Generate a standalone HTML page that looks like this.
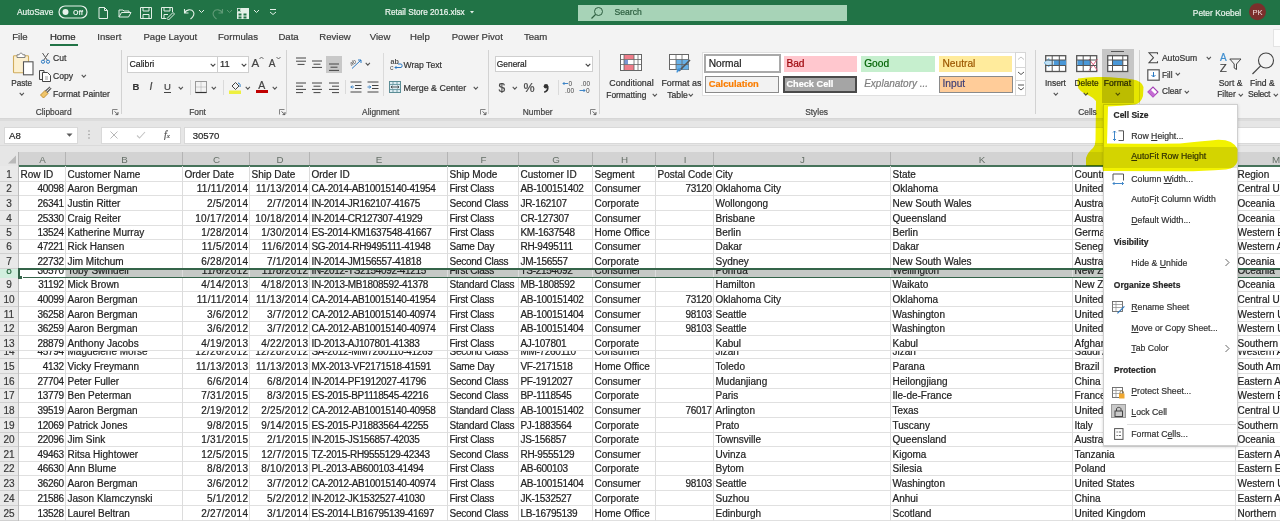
<!DOCTYPE html>
<html><head><meta charset="utf-8"><style>
html,body{margin:0;padding:0;width:1280px;height:521px;overflow:hidden;background:#fff;}
body{position:relative;font-family:"Liberation Sans", sans-serif;}
.t{position:absolute;white-space:nowrap;-webkit-text-stroke-width:0.2px;}
.r{position:absolute;}
.s{position:absolute;overflow:visible;}
u{text-decoration:underline;text-underline-offset:1px;text-decoration-thickness:0.6px;}
</style></head><body>
<div class="r" style="left:0px;top:0px;width:1280px;height:24.5px;background:#217346;"></div><div class="t" style="left:17.00px;top:8.49px;font-size:8.4px;line-height:8.4px;color:#e8f3ec;">AutoSave</div><svg class="s" style="left:58px;top:5px;" width="30" height="14" viewBox="0 0 30 14"><rect x="1" y="1" width="28" height="12" rx="6" fill="none" stroke="#e8f3ec" stroke-width="1.2"/><circle cx="7.5" cy="7" r="3" fill="#e8f3ec"/><text x="15" y="10" font-family="Liberation Sans" font-size="7" font-weight="bold" fill="#e8f3ec">Off</text></svg><svg class="s" style="left:97px;top:6px;" width="12" height="14" viewBox="0 0 12 14"><path d="M2 1.5 H7.5 L10.5 4.5 V12.5 H2 Z M7.5 1.5 V4.5 H10.5" fill="none" stroke="#e3f0e7" stroke-width="1"/></svg><svg class="s" style="left:118px;top:8px;" width="14" height="11" viewBox="0 0 14 11"><path d="M1 2 H5 L6 3 H11 V5 M1 2 V9 H10.5 L13 4.5 H3.5 L1 9" fill="none" stroke="#e3f0e7" stroke-width="1"/></svg><svg class="s" style="left:139px;top:6px;" width="14" height="14" viewBox="0 0 14 14"><path d="M1.5 1.5 H12.5 V12.5 H1.5 Z M4 1.5 V5 H10 V1.5 M4 12.5 V8.5 H10 V12.5" fill="none" stroke="#e3f0e7" stroke-width="1"/></svg><svg class="s" style="left:160px;top:6px;" width="15" height="14" viewBox="0 0 15 14"><path d="M1.5 1.5 H12.5 V6 M1.5 1.5 V12.5 H6 M4 1.5 V5 H10 V1.5 M4 12.5 V8.5 H8" fill="none" stroke="#e3f0e7" stroke-width="1"/><path d="M7 12.5 L13 6.5 L14.5 8 L8.5 14 Z" fill="none" stroke="#e3f0e7" stroke-width="1"/></svg><svg class="s" style="left:182px;top:6px;" width="14" height="14" viewBox="0 0 14 14"><path d="M2.5 3 V7 H6.5 M2.5 7 C4 3.5 9.5 2.5 11.5 6 C13 9 11 11 8.5 13" fill="none" stroke="#e3f0e7" stroke-width="1.1"/></svg><svg class="s" style="left:198px;top:9px;" width="7" height="5" viewBox="0 0 7 5"><path d="M1 1 L3.5 3.5 L6 1" fill="none" stroke="#e3f0e7" stroke-width="1"/></svg><svg class="s" style="left:211px;top:6px;" width="14" height="14" viewBox="0 0 14 14"><path d="M11.5 3 V7 H7.5 M11.5 7 C10 3.5 4.5 2.5 2.5 6 C1 9 3 11 5.5 13" fill="none" stroke="#5f9a76" stroke-width="1.1"/></svg><svg class="s" style="left:226px;top:9px;" width="7" height="5" viewBox="0 0 7 5"><path d="M1 1 L3.5 3.5 L6 1" fill="none" stroke="#5f9a76" stroke-width="1"/></svg><svg class="s" style="left:236px;top:7px;" width="14" height="12" viewBox="0 0 14 12"><rect x="1" y="1" width="12" height="11" fill="#e3f0e7"/><rect x="2.5" y="6.5" width="3" height="2" fill="#217346"/><rect x="7.5" y="6.5" width="3" height="2" fill="#217346"/><rect x="2.5" y="9.5" width="3" height="2" fill="#217346"/><rect x="7.5" y="9.5" width="3" height="2" fill="#217346"/><rect x="1" y="1" width="4" height="4" fill="#217346"/><rect x="1.5" y="1.5" width="3" height="3" fill="none" stroke="#e3f0e7" stroke-width="0.8"/></svg><svg class="s" style="left:253px;top:9px;" width="7" height="5" viewBox="0 0 7 5"><path d="M1 1 L3.5 3.5 L6 1" fill="none" stroke="#e3f0e7" stroke-width="1"/></svg><svg class="s" style="left:269px;top:8px;" width="8" height="9" viewBox="0 0 8 9"><path d="M1 1.5 H7 M1 4 L4 6.5 L7 4" fill="none" stroke="#e3f0e7" stroke-width="1"/></svg><div class="t" style="left:385.00px;top:9.16px;font-size:8.2px;line-height:8.2px;color:#eef6f0;">Retail Store 2016.xlsx</div><svg class="s" style="left:469px;top:10px;" width="7" height="5" viewBox="0 0 7 5"><path d="M1 1 L5 1 L3 3.5 Z" fill="#e3f0e7"/></svg><div class="r" style="left:578px;top:4.5px;width:269px;height:16px;background:#a7d3b7;"></div><svg class="s" style="left:590px;top:6px;" width="14" height="14" viewBox="0 0 14 14"><circle cx="8.5" cy="5.5" r="4" fill="none" stroke="#2b5d3e" stroke-width="1"/><path d="M5.5 8.5 L1.5 12.5" stroke="#2b5d3e" stroke-width="1.1"/></svg><div class="t" style="left:614.50px;top:8.32px;font-size:8.6px;line-height:8.6px;color:#2b5d3e;">Search</div><div class="t" style="left:1192.80px;top:8.79px;font-size:8.4px;line-height:8.4px;color:#e8f3ec;">Peter Koebel</div><svg class="s" style="left:1248px;top:3px;" width="19" height="18" viewBox="0 0 19 18"><circle cx="9.5" cy="8.8" r="8.5" fill="#7b2f2c"/><text x="9.5" y="11.9" text-anchor="middle" font-family="Liberation Sans" font-size="7.6" fill="#f3dede">PK</text></svg><div class="r" style="left:0px;top:24.5px;width:1280px;height:93.5px;background:#f3f3f3;"></div><div class="t" style="left:12.20px;top:31.87px;font-size:9.6px;line-height:9.6px;color:#3b3b3b;">File</div><div class="t" style="left:49.90px;top:31.87px;font-size:9.6px;line-height:9.6px;color:#262626;">Home</div><div class="t" style="left:97.30px;top:31.87px;font-size:9.6px;line-height:9.6px;color:#3b3b3b;">Insert</div><div class="t" style="left:143.40px;top:31.87px;font-size:9.6px;line-height:9.6px;color:#3b3b3b;">Page Layout</div><div class="t" style="left:218.00px;top:31.87px;font-size:9.6px;line-height:9.6px;color:#3b3b3b;">Formulas</div><div class="t" style="left:278.40px;top:31.87px;font-size:9.6px;line-height:9.6px;color:#3b3b3b;">Data</div><div class="t" style="left:319.30px;top:31.87px;font-size:9.6px;line-height:9.6px;color:#3b3b3b;">Review</div><div class="t" style="left:369.70px;top:31.87px;font-size:9.6px;line-height:9.6px;color:#3b3b3b;">View</div><div class="t" style="left:410.00px;top:31.87px;font-size:9.6px;line-height:9.6px;color:#3b3b3b;">Help</div><div class="t" style="left:451.70px;top:31.87px;font-size:9.6px;line-height:9.6px;color:#3b3b3b;">Power Pivot</div><div class="t" style="left:523.90px;top:31.87px;font-size:9.6px;line-height:9.6px;color:#3b3b3b;">Team</div><div class="r" style="left:50px;top:43.6px;width:28px;height:2px;background:#217346;"></div><div class="r" style="left:1273px;top:28.5px;width:7px;height:16px;background:#fdfdfd;border:1px solid #e3e3e3;"></div><svg class="s" style="left:12px;top:51px;" width="23" height="25" viewBox="0 0 23 25"><rect x="1.5" y="4.8" width="15" height="17" rx="0.8" fill="#fcf0d0" stroke="#d0ac5c" stroke-width="1.1"/><path d="M5 5.5 V3.8 H7.2 C7.4 1.6 10.6 1.6 10.8 3.8 H13 V6.5 H5 Z" fill="#fff" stroke="#777" stroke-width="0.9"/><rect x="11.5" y="10.8" width="9.5" height="13" fill="#fff" stroke="#555" stroke-width="1.1"/></svg><div class="t" style="left:11.20px;top:79.86px;font-size:8.2px;line-height:8.2px;color:#333;">Paste</div><svg class="s" style="left:18.7px;top:92px;" width="5.6" height="4.5" viewBox="0 0 5.6 4.5"><path d="M0.7 0.9 L2.8 3.2 L4.8999999999999995 0.9" fill="none" stroke="#555" stroke-width="1.05"/></svg><svg class="s" style="left:40px;top:52px;" width="11" height="12" viewBox="0 0 11 12"><path d="M2.5 1 L7.5 8.5 M8.5 1 L3.5 8.5" stroke="#555" stroke-width="1"/><circle cx="3" cy="9.7" r="1.6" fill="none" stroke="#2b79c2" stroke-width="1"/><circle cx="8" cy="9.7" r="1.6" fill="none" stroke="#2b79c2" stroke-width="1"/></svg><div class="t" style="left:53.00px;top:54.22px;font-size:8.6px;line-height:8.6px;color:#333;">Cut</div><svg class="s" style="left:38px;top:69px;" width="14" height="14" viewBox="0 0 14 14"><path d="M6 3.5 V1.5 H1.5 V10.5 H4.5" fill="none" stroke="#444" stroke-width="1"/><path d="M4.5 3.5 H9.5 L12.5 6.5 V12.5 H4.5 Z" fill="#fff" stroke="#444" stroke-width="1"/><path d="M7 8 H10 M7 10 H10" stroke="#888" stroke-width="0.8"/></svg><div class="t" style="left:53.00px;top:72.22px;font-size:8.6px;line-height:8.6px;color:#333;">Copy</div><svg class="s" style="left:80.7px;top:73.5px;" width="5.6" height="4.5" viewBox="0 0 5.6 4.5"><path d="M0.7 0.9 L2.8 3.2 L4.8999999999999995 0.9" fill="none" stroke="#555" stroke-width="1.05"/></svg><svg class="s" style="left:39px;top:86px;" width="13" height="13" viewBox="0 0 13 13"><path d="M1.5 9 L6 4.5 L9 7.5 L4.5 12 Z" fill="#f0c56a" stroke="#c08a2a" stroke-width="0.9"/><path d="M6.5 5 L11 0.8 M8 6.5 L12.2 2.2" stroke="#555" stroke-width="1.1"/></svg><div class="t" style="left:53.00px;top:89.50px;font-size:8.62px;line-height:8.62px;color:#333;">Format Painter</div><div class="t" style="left:35.70px;top:107.89px;font-size:8.4px;line-height:8.4px;color:#444;">Clipboard</div><svg class="s" style="left:112px;top:109px;" width="7" height="6" viewBox="0 0 7 6"><path d="M0.5 5.5 V0.5 H5.5" fill="none" stroke="#777" stroke-width="0.9"/><path d="M2.5 2.5 L6 5.5 M6 3 V5.6 H3.5" fill="none" stroke="#555" stroke-width="0.9"/></svg><div class="r" style="left:120.5px;top:50px;width:1px;height:64px;background:#d2d2d2;"></div><div class="r" style="left:127px;top:56px;width:90.5px;height:16.5px;background:#fff;box-sizing:border-box;border:1px solid #cfcfcf;"></div><div class="t" style="left:129.40px;top:60.05px;font-size:8.8px;line-height:8.8px;color:#262626;">Calibri</div><svg class="s" style="left:209.6px;top:63px;" width="6" height="4.5" viewBox="0 0 6 4.5"><path d="M0.7 0.9 L3.0 3.2 L5.3 0.9" fill="none" stroke="#444" stroke-width="1.05"/></svg><div class="r" style="left:217px;top:56px;width:31.6px;height:16.5px;background:#fff;box-sizing:border-box;border:1px solid #cfcfcf;"></div><div class="t" style="left:220.00px;top:59.63px;font-size:9.3px;line-height:9.3px;color:#262626;">11</div><svg class="s" style="left:241.3px;top:63px;" width="6" height="4.5" viewBox="0 0 6 4.5"><path d="M0.7 0.9 L3.0 3.2 L5.3 0.9" fill="none" stroke="#444" stroke-width="1.05"/></svg><div class="t" style="left:251.50px;top:58.07px;font-size:11.5px;line-height:11.5px;color:#444;">A</div><svg class="s" style="left:259px;top:56px;" width="5" height="4" viewBox="0 0 5 4"><path d="M0.5 3 L2.5 1 L4.5 3" fill="none" stroke="#444" stroke-width="0.8"/></svg><div class="t" style="left:268.80px;top:59.33px;font-size:10px;line-height:10px;color:#444;">A</div><svg class="s" style="left:275.5px;top:56px;" width="5" height="4" viewBox="0 0 5 4"><path d="M0.5 1 L2.5 3 L4.5 1" fill="none" stroke="#444" stroke-width="0.8"/></svg><div class="t" style="left:132.50px;top:81.96px;font-size:9.5px;line-height:9.5px;color:#333;font-weight:bold;">B</div><div class="t" style="left:149.50px;top:81.41px;font-size:10.5px;line-height:10.5px;color:#444;font-style:italic;font-family:"Liberation Serif",serif;">I</div><div class="t" style="left:164.00px;top:81.96px;font-size:9.5px;line-height:9.5px;color:#444;">U</div><div class="r" style="left:164px;top:91.5px;width:6.8px;height:0.9px;background:#444;"></div><svg class="s" style="left:177.7px;top:85.5px;" width="5.6" height="4.5" viewBox="0 0 5.6 4.5"><path d="M0.7 0.9 L2.8 3.2 L4.8999999999999995 0.9" fill="none" stroke="#555" stroke-width="1.05"/></svg><div class="r" style="left:189.9px;top:80.3px;width:1px;height:15.100000000000009px;background:#dadada;"></div><svg class="s" style="left:195px;top:81px;" width="12" height="12" viewBox="0 0 12 12"><rect x="0.5" y="0.5" width="11" height="11" fill="none" stroke="#999" stroke-width="1"/><path d="M6 0.5 V11.5 M0.5 6 H11.5" stroke="#999" stroke-width="0.8" stroke-dasharray="1 1"/><path d="M0.5 11.5 H11.5" stroke="#333" stroke-width="1.2"/></svg><svg class="s" style="left:211.2px;top:85.5px;" width="5.6" height="4.5" viewBox="0 0 5.6 4.5"><path d="M0.7 0.9 L2.8 3.2 L4.8999999999999995 0.9" fill="none" stroke="#555" stroke-width="1.05"/></svg><div class="r" style="left:223.3px;top:80.3px;width:1px;height:15.100000000000009px;background:#dadada;"></div><svg class="s" style="left:229px;top:80px;" width="13" height="15" viewBox="0 0 13 15"><path d="M3 6 L6.5 2.5 L10 6 L6.5 9.5 Z" fill="none" stroke="#444" stroke-width="1"/><path d="M9 3 C11 3 11.5 5 11 7" fill="none" stroke="#2b79c2" stroke-width="1"/><rect x="0" y="10.5" width="12" height="3.5" fill="#eef040"/></svg><svg class="s" style="left:245.39999999999998px;top:85.5px;" width="5.6" height="4.5" viewBox="0 0 5.6 4.5"><path d="M0.7 0.9 L2.8 3.2 L4.8999999999999995 0.9" fill="none" stroke="#555" stroke-width="1.05"/></svg><div class="t" style="left:258.30px;top:80.31px;font-size:10.5px;line-height:10.5px;color:#444;">A</div><div class="r" style="left:256px;top:90.4px;width:12px;height:3px;background:#c00000;"></div><svg class="s" style="left:272.3px;top:85.5px;" width="5.6" height="4.5" viewBox="0 0 5.6 4.5"><path d="M0.7 0.9 L2.8 3.2 L4.8999999999999995 0.9" fill="none" stroke="#555" stroke-width="1.05"/></svg><div class="t" style="left:189.20px;top:107.89px;font-size:8.4px;line-height:8.4px;color:#444;">Font</div><svg class="s" style="left:278.5px;top:109px;" width="7" height="6" viewBox="0 0 7 6"><path d="M0.5 5.5 V0.5 H5.5" fill="none" stroke="#777" stroke-width="0.9"/><path d="M2.5 2.5 L6 5.5 M6 3 V5.6 H3.5" fill="none" stroke="#555" stroke-width="0.9"/></svg><div class="r" style="left:286.4px;top:50px;width:1px;height:64px;background:#d2d2d2;"></div><svg class="s" style="left:296px;top:57px;" width="12" height="12" viewBox="0 0 12 12"><path d="M0 1.0 H10" stroke="#444" stroke-width="1"/><path d="M0 4.2 H10" stroke="#444" stroke-width="1"/><path d="M1.5 7.4 H8.5" stroke="#444" stroke-width="1"/></svg><svg class="s" style="left:312px;top:59.5px;" width="12" height="12" viewBox="0 0 12 12"><path d="M0 1.0 H10" stroke="#444" stroke-width="1"/><path d="M1.5 4.2 H8.5" stroke="#444" stroke-width="1"/><path d="M0 7.4 H10" stroke="#444" stroke-width="1"/></svg><div class="r" style="left:325.7px;top:56.2px;width:16px;height:16.4px;background:#c8c8c8;"></div><svg class="s" style="left:328.5px;top:62.5px;" width="12" height="12" viewBox="0 0 12 12"><path d="M0 1.0 H10" stroke="#444" stroke-width="1"/><path d="M1.5 4.2 H8.5" stroke="#444" stroke-width="1"/><path d="M0 7.4 H10" stroke="#444" stroke-width="1"/></svg><svg class="s" style="left:349px;top:57px;" width="14" height="13" viewBox="0 0 14 13"><text x="1" y="7" font-family="Liberation Sans" font-size="6" fill="#444" transform="rotate(-35 5 6)">ab</text><path d="M3 11.5 L12 3 M12 3 H9 M12 3 V6" fill="none" stroke="#2b79c2" stroke-width="1"/></svg><svg class="s" style="left:365.09999999999997px;top:61.5px;" width="5.6" height="4.5" viewBox="0 0 5.6 4.5"><path d="M0.7 0.9 L2.8 3.2 L4.8999999999999995 0.9" fill="none" stroke="#555" stroke-width="1.05"/></svg><div class="r" style="left:383.4px;top:53px;width:1px;height:43px;background:#dadada;"></div><svg class="s" style="left:390px;top:58px;" width="13" height="13" viewBox="0 0 13 13"><text x="0.5" y="5.8" font-family="Liberation Sans" font-size="7.2" font-weight="bold" fill="#555">ab</text><text x="0" y="12" font-family="Liberation Sans" font-size="7" fill="#555">c</text><path d="M5 9.5 H11 C12.5 9.5 12.5 6 11 6 H8" fill="none" stroke="#2b79c2" stroke-width="1"/><path d="M6.5 8 L5 9.5 L6.5 11" fill="none" stroke="#2b79c2" stroke-width="0.9"/></svg><div class="t" style="left:403.50px;top:60.72px;font-size:8.6px;line-height:8.6px;color:#333;">Wrap Text</div><svg class="s" style="left:296px;top:81.5px;" width="12" height="12" viewBox="0 0 12 12"><path d="M0 1.0 H10" stroke="#444" stroke-width="1"/><path d="M0 4.2 H7" stroke="#444" stroke-width="1"/><path d="M0 7.4 H10" stroke="#444" stroke-width="1"/><path d="M0 10.6 H7" stroke="#444" stroke-width="1"/></svg><svg class="s" style="left:312px;top:81.5px;" width="12" height="12" viewBox="0 0 12 12"><path d="M0 1.0 H10" stroke="#444" stroke-width="1"/><path d="M1.5 4.2 H8.5" stroke="#444" stroke-width="1"/><path d="M0 7.4 H10" stroke="#444" stroke-width="1"/><path d="M1.5 10.6 H8.5" stroke="#444" stroke-width="1"/></svg><svg class="s" style="left:328.5px;top:81.5px;" width="12" height="12" viewBox="0 0 12 12"><path d="M0 1.0 H10" stroke="#444" stroke-width="1"/><path d="M3 4.2 H10" stroke="#444" stroke-width="1"/><path d="M0 7.4 H10" stroke="#444" stroke-width="1"/><path d="M3 10.6 H10" stroke="#444" stroke-width="1"/></svg><div class="r" style="left:344.9px;top:80.3px;width:1px;height:13.900000000000006px;background:#dadada;"></div><svg class="s" style="left:350px;top:81px;" width="13" height="12" viewBox="0 0 13 12"><path d="M0.5 1 H11.5 M5 4.5 H11.5 M5 7.5 H11.5 M0.5 11 H11.5" stroke="#444" stroke-width="1"/><path d="M4 6 H0.8 M2.3 4.5 L0.8 6 L2.3 7.5" fill="none" stroke="#2b79c2" stroke-width="0.9"/></svg><svg class="s" style="left:366.5px;top:81px;" width="13" height="12" viewBox="0 0 13 12"><path d="M0.5 1 H11.5 M5 4.5 H11.5 M5 7.5 H11.5 M0.5 11 H11.5" stroke="#444" stroke-width="1"/><path d="M0.5 6 H3.8 M2.3 4.5 L3.8 6 L2.3 7.5" fill="none" stroke="#2b79c2" stroke-width="0.9"/></svg><svg class="s" style="left:389px;top:81px;" width="12" height="12" viewBox="0 0 12 12"><rect x="0.5" y="0.5" width="11" height="11" fill="#dcecf2" stroke="#5b8d96" stroke-width="1"/><path d="M0.5 3.5 H11.5 M0.5 8.5 H11.5 M4 0.5 V3.5 M8 0.5 V3.5 M4 8.5 V11.5 M8 8.5 V11.5" stroke="#5b8d96" stroke-width="0.8"/><path d="M2 6 H10 M3.5 4.8 L2 6 L3.5 7.2 M8.5 4.8 L10 6 L8.5 7.2" fill="none" stroke="#333" stroke-width="0.8"/></svg><div class="t" style="left:403.50px;top:83.77px;font-size:8.9px;line-height:8.9px;color:#333;">Merge &amp; Center</div><svg class="s" style="left:472.8px;top:86px;" width="5.6" height="4.5" viewBox="0 0 5.6 4.5"><path d="M0.7 0.9 L2.8 3.2 L4.8999999999999995 0.9" fill="none" stroke="#555" stroke-width="1.05"/></svg><div class="t" style="left:362.10px;top:107.89px;font-size:8.4px;line-height:8.4px;color:#444;">Alignment</div><svg class="s" style="left:480px;top:109px;" width="7" height="6" viewBox="0 0 7 6"><path d="M0.5 5.5 V0.5 H5.5" fill="none" stroke="#777" stroke-width="0.9"/><path d="M2.5 2.5 L6 5.5 M6 3 V5.6 H3.5" fill="none" stroke="#555" stroke-width="0.9"/></svg><div class="r" style="left:488.4px;top:50px;width:1px;height:64px;background:#d2d2d2;"></div><div class="r" style="left:494.7px;top:56px;width:98px;height:16.3px;background:#fff;box-sizing:border-box;border:1px solid #cfcfcf;"></div><div class="t" style="left:496.80px;top:60.39px;font-size:8.4px;line-height:8.4px;color:#262626;">General</div><svg class="s" style="left:584.8px;top:62.5px;" width="6" height="4.5" viewBox="0 0 6 4.5"><path d="M0.7 0.9 L3.0 3.2 L5.3 0.9" fill="none" stroke="#444" stroke-width="1.05"/></svg><div class="t" style="left:498.50px;top:81.84px;font-size:12px;line-height:12px;color:#444;">$</div><svg class="s" style="left:512.4000000000001px;top:85.5px;" width="5.6" height="4.5" viewBox="0 0 5.6 4.5"><path d="M0.7 0.9 L2.8 3.2 L4.8999999999999995 0.9" fill="none" stroke="#555" stroke-width="1.05"/></svg><div class="t" style="left:523.50px;top:81.92px;font-size:12.5px;line-height:12.5px;color:#444;">%</div><svg class="s" style="left:542px;top:83px;" width="8" height="10" viewBox="0 0 8 10"><circle cx="4" cy="3.2" r="2.3" fill="#333"/><path d="M5.8 3.5 C6.2 6.5 4.5 8.5 2.2 9.3" fill="none" stroke="#333" stroke-width="1.5"/></svg><div class="r" style="left:557.6px;top:80px;width:1px;height:15px;background:#dadada;"></div><svg class="s" style="left:562px;top:80px;" width="13" height="14" viewBox="0 0 13 14"><text x="6.5" y="6" font-family="Liberation Sans" font-size="6.5" fill="#444">0</text><text x="3" y="13" font-family="Liberation Sans" font-size="6.5" fill="#444">.00</text><path d="M6 3.5 H1 M2.5 2 L1 3.5 L2.5 5" fill="none" stroke="#2b79c2" stroke-width="0.9"/></svg><svg class="s" style="left:578.5px;top:80px;" width="13" height="14" viewBox="0 0 13 14"><text x="2" y="6" font-family="Liberation Sans" font-size="6.5" fill="#444">.00</text><text x="7" y="13" font-family="Liberation Sans" font-size="6.5" fill="#444">0</text><path d="M0.5 10.5 H6 M4.5 9 L6 10.5 L4.5 12" fill="none" stroke="#2b79c2" stroke-width="0.9"/></svg><div class="t" style="left:522.80px;top:107.89px;font-size:8.4px;line-height:8.4px;color:#444;">Number</div><svg class="s" style="left:590px;top:109px;" width="7" height="6" viewBox="0 0 7 6"><path d="M0.5 5.5 V0.5 H5.5" fill="none" stroke="#777" stroke-width="0.9"/><path d="M2.5 2.5 L6 5.5 M6 3 V5.6 H3.5" fill="none" stroke="#555" stroke-width="0.9"/></svg><div class="r" style="left:598.9px;top:50px;width:1px;height:64px;background:#d2d2d2;"></div><svg class="s" style="left:620px;top:54px;" width="23" height="18" viewBox="0 0 23 18"><rect x="0.5" y="0.5" width="21" height="16" fill="#fff" stroke="#666" stroke-width="1"/><rect x="4" y="1" width="10" height="4.5" fill="#ef7d8a"/><rect x="4" y="6" width="4" height="4.5" fill="#7b97d3"/><rect x="8" y="6" width="6" height="4.5" fill="#fff"/><rect x="4" y="11" width="10" height="5" fill="#ef7d8a"/><path d="M0.5 5.5 H21.5 M0.5 10.5 H21.5 M4 0.5 V16.5 M14 0.5 V16.5 M18 0.5 V16.5" stroke="#666" stroke-width="0.8"/></svg><div class="t" style="left:609.30px;top:78.67px;font-size:8.9px;line-height:8.9px;color:#333;">Conditional</div><div class="t" style="left:606.30px;top:90.79px;font-size:8.4px;line-height:8.4px;color:#333;">Formatting</div><svg class="s" style="left:651.9000000000001px;top:92.6px;" width="5.6" height="4.5" viewBox="0 0 5.6 4.5"><path d="M0.7 0.9 L2.8 3.2 L4.8999999999999995 0.9" fill="none" stroke="#555" stroke-width="1.05"/></svg><svg class="s" style="left:669px;top:54px;" width="24" height="19" viewBox="0 0 24 19"><rect x="0.5" y="0.5" width="19" height="15" fill="#fff" stroke="#666" stroke-width="1"/><rect x="7" y="5.5" width="12.5" height="10" fill="#67b0e6"/><path d="M0.5 5.5 H19.5 M0.5 10.5 H19.5 M7 0.5 V15.5 M13 0.5 V15.5" stroke="#666" stroke-width="0.8"/><path d="M10 17 L21 6" stroke="#555" stroke-width="1.6"/><path d="M8 18.5 C8 15 10 14 12 15.5" fill="#3d8fd6" stroke="#3d8fd6"/></svg><div class="t" style="left:661.40px;top:78.67px;font-size:8.9px;line-height:8.9px;color:#333;">Format as</div><div class="t" style="left:667.30px;top:90.62px;font-size:8.6px;line-height:8.6px;color:#333;">Table</div><svg class="s" style="left:688.0px;top:92.6px;" width="5.6" height="4.5" viewBox="0 0 5.6 4.5"><path d="M0.7 0.9 L2.8 3.2 L4.8999999999999995 0.9" fill="none" stroke="#555" stroke-width="1.05"/></svg><div class="r" style="left:702.2px;top:51.5px;width:313.5px;height:44.6px;background:#fff;box-sizing:border-box;border:1px solid #e0e0e0;border-right:none;"></div><div class="r" style="left:703.9px;top:53.9px;width:76.8px;height:19.2px;background:#fff;box-sizing:border-box;border:2px solid #a9a9a9;"></div><div class="t" style="left:708.70px;top:59.37px;font-size:10.2px;line-height:10.2px;color:#222;">Normal</div><div class="r" style="left:783.6px;top:55.8px;width:73.4px;height:15.8px;background:#ffc7ce;"></div><div class="t" style="left:786.40px;top:59.37px;font-size:10.2px;line-height:10.2px;color:#9c0006;">Bad</div><div class="r" style="left:860.9px;top:55.8px;width:74px;height:15.9px;background:#c6efce;"></div><div class="t" style="left:864.20px;top:59.37px;font-size:10.2px;line-height:10.2px;color:#006100;">Good</div><div class="r" style="left:939.3px;top:55.8px;width:72.7px;height:15.9px;background:#ffeb9c;"></div><div class="t" style="left:942.50px;top:59.37px;font-size:10.2px;line-height:10.2px;color:#9c5700;">Neutral</div><div class="r" style="left:705px;top:76px;width:73.5px;height:16.5px;background:#f2f2f2;box-sizing:border-box;border:1px solid #8a8a8a;"></div><div class="t" style="left:708.70px;top:79.93px;font-size:9.3px;line-height:9.3px;color:#fa7d00;font-weight:bold;">Calculation</div><div class="r" style="left:783.1px;top:76px;width:73.9px;height:17.2px;background:#a5a5a5;box-sizing:border-box;border:2.5px solid #4a4a4a;"></div><div class="t" style="left:786.40px;top:80.01px;font-size:9.2px;line-height:9.2px;color:#ffffff;font-weight:bold;">Check Cell</div><div class="t" style="left:864.20px;top:79.13px;font-size:10.0px;line-height:10.0px;color:#7f7f7f;font-style:italic;">Explanatory ...</div><div class="r" style="left:938.9px;top:76.2px;width:73.7px;height:16.6px;background:#ffcc99;box-sizing:border-box;border:1px solid #8a8a8a;"></div><div class="t" style="left:942.50px;top:78.97px;font-size:10.2px;line-height:10.2px;color:#3f3f76;">Input</div><div class="r" style="left:1015.3px;top:51.7px;width:11px;height:44.5px;background:#fff;box-sizing:border-box;border:1px solid #d6d6d6;"></div><div class="r" style="left:1015.3px;top:66.5px;width:11px;height:1px;background:#d6d6d6;"></div><div class="r" style="left:1015.3px;top:80.3px;width:11px;height:1px;background:#d6d6d6;"></div><svg class="s" style="left:1017px;top:56px;" width="8" height="5" viewBox="0 0 8 5"><path d="M1 3.5 L4 1 L7 3.5" fill="none" stroke="#bbb" stroke-width="0.9"/></svg><svg class="s" style="left:1017px;top:71px;" width="8" height="5" viewBox="0 0 8 5"><path d="M1 1 L4 3.5 L7 1" fill="none" stroke="#444" stroke-width="0.9"/></svg><svg class="s" style="left:1017px;top:84px;" width="8" height="8" viewBox="0 0 8 8"><path d="M1 1 H7 M1 3.5 L4 6 L7 3.5" fill="none" stroke="#444" stroke-width="0.9"/></svg><div class="t" style="left:805.20px;top:107.89px;font-size:8.4px;line-height:8.4px;color:#444;">Styles</div><div class="r" style="left:1034.6px;top:50px;width:1px;height:64px;background:#d2d2d2;"></div><svg class="s" style="left:1045px;top:54.5px;" width="23" height="18" viewBox="0 0 23 18"><rect x="0.7" y="0.7" width="20" height="15.8" fill="#fff" stroke="#555" stroke-width="1.3"/><rect x="1.5" y="5" width="19.5" height="5.5" fill="#4a98d8"/><path d="M9 5.5 L4 5.5 L4 3.5 L-1 7.8 L4 12 L4 10 L9 10" fill="#bfe0f5" stroke="#6fb2de" stroke-width="0.8"/><path d="M0.7 5 H20.7 M0.7 10.5 H20.7 M7.2 0.7 V16.5 M14.3 0.7 V16.5" stroke="#555" stroke-width="1"/></svg><div class="t" style="left:1045.00px;top:78.89px;font-size:8.4px;line-height:8.4px;color:#333;">Insert</div><svg class="s" style="left:1053.1000000000001px;top:92px;" width="5.6" height="4.5" viewBox="0 0 5.6 4.5"><path d="M0.7 0.9 L2.8 3.2 L4.8999999999999995 0.9" fill="none" stroke="#555" stroke-width="1.05"/></svg><svg class="s" style="left:1076px;top:54.5px;" width="23" height="18" viewBox="0 0 23 18"><rect x="0.7" y="0.7" width="20" height="15.8" fill="#fff" stroke="#555" stroke-width="1.3"/><rect x="1.5" y="5" width="12.5" height="5.5" fill="#4a98d8"/><path d="M13 4 L21.5 15.5 M21.5 4 L13 15.5" stroke="#e06080" stroke-width="1"/><path d="M0.7 5 H20.7 M0.7 10.5 H20.7 M7.2 0.7 V16.5 M14.3 0.7 V16.5" stroke="#555" stroke-width="1"/></svg><div class="t" style="left:1074.60px;top:78.97px;font-size:8.3px;line-height:8.3px;color:#333;">Delete</div><svg class="s" style="left:1083.2px;top:92px;" width="5.6" height="4.5" viewBox="0 0 5.6 4.5"><path d="M0.7 0.9 L2.8 3.2 L4.8999999999999995 0.9" fill="none" stroke="#555" stroke-width="1.05"/></svg><div class="r" style="left:1102.4px;top:49.3px;width:31.6px;height:53.3px;background:#c6c6c6;"></div><div class="r" style="left:1111px;top:51px;width:12.6px;height:1px;background:#555;"></div><svg class="s" style="left:1107px;top:54.5px;" width="23" height="18" viewBox="0 0 23 18"><rect x="0.7" y="0.7" width="20" height="15.8" fill="#fff" stroke="#555" stroke-width="1.3"/><rect x="5.5" y="5" width="10.3" height="5.5" fill="#4a98d8"/><path d="M0.7 5 H20.7 M0.7 10.5 H20.7 M5.5 0.7 V16.5 M15.8 0.7 V16.5" stroke="#555" stroke-width="1"/></svg><div class="t" style="left:1103.80px;top:78.72px;font-size:8.6px;line-height:8.6px;color:#262626;">Format</div><svg class="s" style="left:1114.7px;top:92px;" width="5.6" height="4.5" viewBox="0 0 5.6 4.5"><path d="M0.7 0.9 L2.8 3.2 L4.8999999999999995 0.9" fill="none" stroke="#555" stroke-width="1.05"/></svg><div class="t" style="left:1078.20px;top:107.89px;font-size:8.4px;line-height:8.4px;color:#444;">Cells</div><div class="r" style="left:1139.4px;top:50px;width:1px;height:64px;background:#d2d2d2;"></div><svg class="s" style="left:1148px;top:52px;" width="11" height="11.5" viewBox="0 0 11 11.5"><path d="M9.5 2.2 V0.8 H1 L5.5 5.7 L1 10.7 H9.5 V9.3" fill="none" stroke="#444" stroke-width="1.05"/></svg><div class="t" style="left:1161.90px;top:54.02px;font-size:8.6px;line-height:8.6px;color:#333;">AutoSum</div><svg class="s" style="left:1205.6000000000001px;top:56.3px;" width="5.6" height="4.5" viewBox="0 0 5.6 4.5"><path d="M0.7 0.9 L2.8 3.2 L4.8999999999999995 0.9" fill="none" stroke="#555" stroke-width="1.05"/></svg><svg class="s" style="left:1147px;top:68.5px;" width="13" height="12" viewBox="0 0 13 12"><rect x="0.8" y="0.8" width="11.4" height="10.4" fill="#fff" stroke="#555" stroke-width="1.2"/><path d="M6.5 3 V8 M4.5 6 L6.5 8 L8.5 6" fill="none" stroke="#2b79c2" stroke-width="1"/></svg><div class="t" style="left:1161.90px;top:70.57px;font-size:8.3px;line-height:8.3px;color:#333;">Fill</div><svg class="s" style="left:1174.5px;top:72.4px;" width="5.6" height="4.5" viewBox="0 0 5.6 4.5"><path d="M0.7 0.9 L2.8 3.2 L4.8999999999999995 0.9" fill="none" stroke="#555" stroke-width="1.05"/></svg><svg class="s" style="left:1147px;top:85px;" width="13" height="13" viewBox="0 0 13 13"><path d="M1 7 L6 2 L11 7 L6 12 Z" fill="#fff" stroke="#a43fb5" stroke-width="1.1"/><path d="M1 7 L3.5 4.5 L8.5 9.5 L6 12 Z" fill="#c46ad3"/></svg><div class="t" style="left:1161.90px;top:87.47px;font-size:8.3px;line-height:8.3px;color:#333;">Clear</div><svg class="s" style="left:1183.7px;top:89.9px;" width="5.6" height="4.5" viewBox="0 0 5.6 4.5"><path d="M0.7 0.9 L2.8 3.2 L4.8999999999999995 0.9" fill="none" stroke="#555" stroke-width="1.05"/></svg><div class="t" style="left:1220.00px;top:53.14px;font-size:10px;line-height:10px;color:#3f8fd0;">A</div><div class="t" style="left:1219.80px;top:63.07px;font-size:11.5px;line-height:11.5px;color:#444;">Z</div><svg class="s" style="left:1228.5px;top:57.5px;" width="13" height="13" viewBox="0 0 13 13"><path d="M0.8 1 H12 L7.5 6 V11.5 L5.2 10 V6 Z" fill="none" stroke="#444" stroke-width="1"/></svg><div class="t" style="left:1218.70px;top:78.60px;font-size:8.5px;line-height:8.5px;color:#333;">Sort &amp;</div><div class="t" style="left:1217.20px;top:90.49px;font-size:8.4px;line-height:8.4px;color:#333;">Filter</div><svg class="s" style="left:1238.2px;top:92.6px;" width="5.6" height="4.5" viewBox="0 0 5.6 4.5"><path d="M0.7 0.9 L2.8 3.2 L4.8999999999999995 0.9" fill="none" stroke="#555" stroke-width="1.05"/></svg><svg class="s" style="left:1251px;top:52px;" width="25" height="23" viewBox="0 0 25 23"><circle cx="15" cy="8.5" r="7.5" fill="none" stroke="#444" stroke-width="1.1"/><path d="M9.6 13.9 L1.5 22" stroke="#444" stroke-width="1.2"/></svg><div class="t" style="left:1249.90px;top:78.52px;font-size:8.6px;line-height:8.6px;color:#333;">Find &amp;</div><div class="t" style="left:1248.10px;top:90.32px;font-size:8.6px;line-height:8.6px;color:#333;letter-spacing:-0.3px;">Select</div><svg class="s" style="left:1272.6000000000001px;top:92.6px;" width="5.6" height="4.5" viewBox="0 0 5.6 4.5"><path d="M0.7 0.9 L2.8 3.2 L4.8999999999999995 0.9" fill="none" stroke="#555" stroke-width="1.05"/></svg><div class="r" style="left:0px;top:117.5px;width:1280px;height:1px;background:#d6d6d6;"></div><div class="r" style="left:0px;top:118.5px;width:1280px;height:33.5px;background:#e6e6e6;"></div><div class="r" style="left:0px;top:118.5px;width:1280px;height:2px;background:#dcdcdc;"></div><div class="r" style="left:4px;top:126.5px;width:74px;height:17.8px;background:#fff;box-sizing:border-box;border:1px solid #d9d9d9;"></div><div class="t" style="left:9.10px;top:131.07px;font-size:9.6px;line-height:9.6px;color:#262626;">A8</div><svg class="s" style="left:66px;top:133px;" width="7" height="5" viewBox="0 0 7 5"><path d="M0.5 0.5 H6.5 L3.5 3.8 Z" fill="#5a5a5a"/></svg><svg class="s" style="left:87px;top:128px;" width="4" height="14" viewBox="0 0 4 14"><circle cx="2" cy="3" r="0.8" fill="#9a9a9a"/><circle cx="2" cy="6.5" r="0.8" fill="#9a9a9a"/><circle cx="2" cy="10" r="0.8" fill="#9a9a9a"/></svg><div class="r" style="left:101px;top:126.5px;width:80px;height:17.8px;background:#fff;box-sizing:border-box;border:1px solid #d9d9d9;"></div><svg class="s" style="left:109px;top:130px;" width="10" height="10" viewBox="0 0 10 10"><path d="M1.5 1.5 L8.5 8.5 M8.5 1.5 L1.5 8.5" stroke="#b8b8b8" stroke-width="1"/></svg><svg class="s" style="left:136px;top:130px;" width="10" height="10" viewBox="0 0 10 10"><path d="M1 5.5 L3.5 8 L9 2" fill="none" stroke="#c4c4c4" stroke-width="1.1"/></svg><div class="t" style="left:164px;top:128px;font-family:'Liberation Serif',serif;font-style:italic;font-size:10px;line-height:14px;color:#555">f<span style="font-size:7px">x</span></div><div class="r" style="left:184px;top:126.5px;width:1096px;height:17.8px;background:#fff;box-sizing:border-box;border:1px solid #d9d9d9;border-right:none;"></div><div class="t" style="left:192.70px;top:131.07px;font-size:9.6px;line-height:9.6px;color:#262626;">30570</div><div class="r" style="left:0px;top:145px;width:1280px;height:1px;background:#dadada;"></div><div class="r" style="left:18px;top:166px;width:1262px;height:355px;background:#fff;"></div><div class="r" style="left:0px;top:152px;width:1280px;height:14px;background:#d3d3d3;"></div><div class="r" style="left:0px;top:152px;width:18px;height:14px;background:#e6e6e6;"></div><svg class="s" style="left:0px;top:152px;" width="18" height="14" viewBox="0 0 18 14"><path d="M16 3.5 L16 11.5 L8 11.5 Z" fill="#b9b9b9"/></svg><div class="r" style="left:18px;top:165px;width:1262px;height:1.6px;background:#46735a;"></div><div class="t" style="left:42.50px;transform:translateX(-50%);top:154.90px;font-size:9.8px;line-height:9.8px;color:#667068;-webkit-text-stroke-width:0;">A</div><div class="r" style="left:65px;top:152px;width:1px;height:13px;background:#b4b4b4;"></div><div class="t" style="left:124.50px;transform:translateX(-50%);top:154.90px;font-size:9.8px;line-height:9.8px;color:#667068;-webkit-text-stroke-width:0;">B</div><div class="r" style="left:182px;top:152px;width:1px;height:13px;background:#b4b4b4;"></div><div class="t" style="left:216.50px;transform:translateX(-50%);top:154.90px;font-size:9.8px;line-height:9.8px;color:#667068;-webkit-text-stroke-width:0;">C</div><div class="r" style="left:249px;top:152px;width:1px;height:13px;background:#b4b4b4;"></div><div class="t" style="left:280.00px;transform:translateX(-50%);top:154.90px;font-size:9.8px;line-height:9.8px;color:#667068;-webkit-text-stroke-width:0;">D</div><div class="r" style="left:309px;top:152px;width:1px;height:13px;background:#b4b4b4;"></div><div class="t" style="left:379.00px;transform:translateX(-50%);top:154.90px;font-size:9.8px;line-height:9.8px;color:#667068;-webkit-text-stroke-width:0;">E</div><div class="r" style="left:447px;top:152px;width:1px;height:13px;background:#b4b4b4;"></div><div class="t" style="left:483.50px;transform:translateX(-50%);top:154.90px;font-size:9.8px;line-height:9.8px;color:#667068;-webkit-text-stroke-width:0;">F</div><div class="r" style="left:518px;top:152px;width:1px;height:13px;background:#b4b4b4;"></div><div class="t" style="left:556.00px;transform:translateX(-50%);top:154.90px;font-size:9.8px;line-height:9.8px;color:#667068;-webkit-text-stroke-width:0;">G</div><div class="r" style="left:592px;top:152px;width:1px;height:13px;background:#b4b4b4;"></div><div class="t" style="left:624.50px;transform:translateX(-50%);top:154.90px;font-size:9.8px;line-height:9.8px;color:#667068;-webkit-text-stroke-width:0;">H</div><div class="r" style="left:655px;top:152px;width:1px;height:13px;background:#b4b4b4;"></div><div class="t" style="left:685.00px;transform:translateX(-50%);top:154.90px;font-size:9.8px;line-height:9.8px;color:#667068;-webkit-text-stroke-width:0;">I</div><div class="r" style="left:713px;top:152px;width:1px;height:13px;background:#b4b4b4;"></div><div class="t" style="left:802.50px;transform:translateX(-50%);top:154.90px;font-size:9.8px;line-height:9.8px;color:#667068;-webkit-text-stroke-width:0;">J</div><div class="r" style="left:890px;top:152px;width:1px;height:13px;background:#b4b4b4;"></div><div class="t" style="left:982.00px;transform:translateX(-50%);top:154.90px;font-size:9.8px;line-height:9.8px;color:#667068;-webkit-text-stroke-width:0;">K</div><div class="r" style="left:1072px;top:152px;width:1px;height:13px;background:#b4b4b4;"></div><div class="t" style="left:1154.50px;transform:translateX(-50%);top:154.90px;font-size:9.8px;line-height:9.8px;color:#667068;-webkit-text-stroke-width:0;">L</div><div class="r" style="left:1235px;top:152px;width:1px;height:13px;background:#b4b4b4;"></div><div class="t" style="left:1276.00px;transform:translateX(-50%);top:154.90px;font-size:9.8px;line-height:9.8px;color:#667068;-webkit-text-stroke-width:0;">M</div><div class="r" style="left:18px;top:152px;width:1px;height:14px;background:#b4b4b4;"></div><div class="r" style="left:0px;top:166px;width:18px;height:355px;background:#e9e9e9;"></div><div class="r" style="left:18px;top:166px;width:1px;height:355px;background:#bdbdbd;"></div><div class="r" style="left:0px;top:181px;width:18px;height:1px;background:#d0d0d0;"></div><div class="r" style="left:19px;top:181px;width:1261px;height:1px;background:#e0e0e0;"></div><div class="r" style="left:0;top:167px;width:18px;height:14px;overflow:hidden"><div class="t" style="left:0;width:18px;text-align:center;top:2.94px;font-size:10px;line-height:10px;color:#3a3a3a">1</div></div><div class="r" style="left:19px;top:167px;width:46px;height:14px;overflow:hidden"><div class="t" style="left:1.5px;top:2.94px;font-size:10.0px;line-height:10.0px;letter-spacing:0px;color:#222">Row ID</div></div><div class="r" style="left:66px;top:167px;width:116px;height:14px;overflow:hidden"><div class="t" style="left:1.5px;top:2.94px;font-size:10.0px;line-height:10.0px;letter-spacing:0px;color:#222">Customer Name</div></div><div class="r" style="left:183px;top:167px;width:66px;height:14px;overflow:hidden"><div class="t" style="left:1.5px;top:2.94px;font-size:10.0px;line-height:10.0px;letter-spacing:0px;color:#222">Order Date</div></div><div class="r" style="left:250px;top:167px;width:59px;height:14px;overflow:hidden"><div class="t" style="left:1.5px;top:2.94px;font-size:10.0px;line-height:10.0px;letter-spacing:0px;color:#222">Ship Date</div></div><div class="r" style="left:310px;top:167px;width:137px;height:14px;overflow:hidden"><div class="t" style="left:1.5px;top:2.94px;font-size:10.0px;line-height:10.0px;letter-spacing:0px;color:#222">Order ID</div></div><div class="r" style="left:448px;top:167px;width:70px;height:14px;overflow:hidden"><div class="t" style="left:1.5px;top:2.94px;font-size:10.0px;line-height:10.0px;letter-spacing:0px;color:#222">Ship Mode</div></div><div class="r" style="left:519px;top:167px;width:73px;height:14px;overflow:hidden"><div class="t" style="left:1.5px;top:2.94px;font-size:10.0px;line-height:10.0px;letter-spacing:0px;color:#222">Customer ID</div></div><div class="r" style="left:593px;top:167px;width:62px;height:14px;overflow:hidden"><div class="t" style="left:1.5px;top:2.94px;font-size:10.0px;line-height:10.0px;letter-spacing:0px;color:#222">Segment</div></div><div class="r" style="left:656px;top:167px;width:57px;height:14px;overflow:hidden"><div class="t" style="left:1.5px;top:2.94px;font-size:10.0px;line-height:10.0px;letter-spacing:0px;color:#222">Postal Code</div></div><div class="r" style="left:714px;top:167px;width:176px;height:14px;overflow:hidden"><div class="t" style="left:1.5px;top:2.94px;font-size:10.0px;line-height:10.0px;letter-spacing:0px;color:#222">City</div></div><div class="r" style="left:891px;top:167px;width:181px;height:14px;overflow:hidden"><div class="t" style="left:1.5px;top:2.94px;font-size:10.0px;line-height:10.0px;letter-spacing:0px;color:#222">State</div></div><div class="r" style="left:1073px;top:167px;width:162px;height:14px;overflow:hidden"><div class="t" style="left:1.5px;top:2.94px;font-size:10.0px;line-height:10.0px;letter-spacing:0px;color:#222">Country</div></div><div class="r" style="left:1236px;top:167px;width:79px;height:14px;overflow:hidden"><div class="t" style="left:1.5px;top:2.94px;font-size:10.0px;line-height:10.0px;letter-spacing:0px;color:#222">Region</div></div><div class="r" style="left:0px;top:195px;width:18px;height:1px;background:#d0d0d0;"></div><div class="r" style="left:19px;top:195px;width:1261px;height:1px;background:#e0e0e0;"></div><div class="r" style="left:0;top:182px;width:18px;height:13px;overflow:hidden"><div class="t" style="left:0;width:18px;text-align:center;top:2.04px;font-size:10px;line-height:10px;color:#3a3a3a">2</div></div><div class="r" style="left:19px;top:182px;width:46px;height:13px;overflow:hidden"><div class="t" style="right:1.30px;top:2.04px;font-size:10.0px;line-height:10.0px;letter-spacing:-0.3px;color:#222">40098</div></div><div class="r" style="left:66px;top:182px;width:116px;height:13px;overflow:hidden"><div class="t" style="left:1.5px;top:2.04px;font-size:10.0px;line-height:10.0px;letter-spacing:0px;color:#222">Aaron Bergman</div></div><div class="r" style="left:183px;top:182px;width:66px;height:13px;overflow:hidden"><div class="t" style="right:0.70px;top:2.04px;font-size:10.0px;line-height:10.0px;letter-spacing:0.3px;color:#222">11/11/2014</div></div><div class="r" style="left:250px;top:182px;width:59px;height:13px;overflow:hidden"><div class="t" style="right:0.70px;top:2.04px;font-size:10.0px;line-height:10.0px;letter-spacing:0.3px;color:#222">11/13/2014</div></div><div class="r" style="left:310px;top:182px;width:137px;height:13px;overflow:hidden"><div class="t" style="left:1.5px;top:2.04px;font-size:10.0px;line-height:10.0px;letter-spacing:-0.32px;color:#222">CA-2014-AB10015140-41954</div></div><div class="r" style="left:448px;top:182px;width:70px;height:13px;overflow:hidden"><div class="t" style="left:1.5px;top:2.04px;font-size:10.0px;line-height:10.0px;letter-spacing:-0.25px;color:#222">First Class</div></div><div class="r" style="left:519px;top:182px;width:73px;height:13px;overflow:hidden"><div class="t" style="left:1.5px;top:2.04px;font-size:10.0px;line-height:10.0px;letter-spacing:-0.3px;color:#222">AB-100151402</div></div><div class="r" style="left:593px;top:182px;width:62px;height:13px;overflow:hidden"><div class="t" style="left:1.5px;top:2.04px;font-size:10.0px;line-height:10.0px;letter-spacing:0px;color:#222">Consumer</div></div><div class="r" style="left:656px;top:182px;width:57px;height:13px;overflow:hidden"><div class="t" style="right:1.30px;top:2.04px;font-size:10.0px;line-height:10.0px;letter-spacing:-0.3px;color:#222">73120</div></div><div class="r" style="left:714px;top:182px;width:176px;height:13px;overflow:hidden"><div class="t" style="left:1.5px;top:2.04px;font-size:10.0px;line-height:10.0px;letter-spacing:0px;color:#222">Oklahoma City</div></div><div class="r" style="left:891px;top:182px;width:181px;height:13px;overflow:hidden"><div class="t" style="left:1.5px;top:2.04px;font-size:10.0px;line-height:10.0px;letter-spacing:0px;color:#222">Oklahoma</div></div><div class="r" style="left:1073px;top:182px;width:162px;height:13px;overflow:hidden"><div class="t" style="left:1.5px;top:2.04px;font-size:10.0px;line-height:10.0px;letter-spacing:0px;color:#222">United States</div></div><div class="r" style="left:1236px;top:182px;width:79px;height:13px;overflow:hidden"><div class="t" style="left:1.5px;top:2.04px;font-size:10.0px;line-height:10.0px;letter-spacing:0px;color:#222">Central US</div></div><div class="r" style="left:0px;top:210px;width:18px;height:1px;background:#d0d0d0;"></div><div class="r" style="left:19px;top:210px;width:1261px;height:1px;background:#e0e0e0;"></div><div class="r" style="left:0;top:196px;width:18px;height:14px;overflow:hidden"><div class="t" style="left:0;width:18px;text-align:center;top:3.04px;font-size:10px;line-height:10px;color:#3a3a3a">3</div></div><div class="r" style="left:19px;top:196px;width:46px;height:14px;overflow:hidden"><div class="t" style="right:1.30px;top:3.04px;font-size:10.0px;line-height:10.0px;letter-spacing:-0.3px;color:#222">26341</div></div><div class="r" style="left:66px;top:196px;width:116px;height:14px;overflow:hidden"><div class="t" style="left:1.5px;top:3.04px;font-size:10.0px;line-height:10.0px;letter-spacing:0px;color:#222">Justin Ritter</div></div><div class="r" style="left:183px;top:196px;width:66px;height:14px;overflow:hidden"><div class="t" style="right:0.70px;top:3.04px;font-size:10.0px;line-height:10.0px;letter-spacing:0.3px;color:#222">2/5/2014</div></div><div class="r" style="left:250px;top:196px;width:59px;height:14px;overflow:hidden"><div class="t" style="right:0.70px;top:3.04px;font-size:10.0px;line-height:10.0px;letter-spacing:0.3px;color:#222">2/7/2014</div></div><div class="r" style="left:310px;top:196px;width:137px;height:14px;overflow:hidden"><div class="t" style="left:1.5px;top:3.04px;font-size:10.0px;line-height:10.0px;letter-spacing:-0.32px;color:#222">IN-2014-JR162107-41675</div></div><div class="r" style="left:448px;top:196px;width:70px;height:14px;overflow:hidden"><div class="t" style="left:1.5px;top:3.04px;font-size:10.0px;line-height:10.0px;letter-spacing:-0.25px;color:#222">Second Class</div></div><div class="r" style="left:519px;top:196px;width:73px;height:14px;overflow:hidden"><div class="t" style="left:1.5px;top:3.04px;font-size:10.0px;line-height:10.0px;letter-spacing:-0.3px;color:#222">JR-162107</div></div><div class="r" style="left:593px;top:196px;width:62px;height:14px;overflow:hidden"><div class="t" style="left:1.5px;top:3.04px;font-size:10.0px;line-height:10.0px;letter-spacing:0px;color:#222">Corporate</div></div><div class="r" style="left:714px;top:196px;width:176px;height:14px;overflow:hidden"><div class="t" style="left:1.5px;top:3.04px;font-size:10.0px;line-height:10.0px;letter-spacing:0px;color:#222">Wollongong</div></div><div class="r" style="left:891px;top:196px;width:181px;height:14px;overflow:hidden"><div class="t" style="left:1.5px;top:3.04px;font-size:10.0px;line-height:10.0px;letter-spacing:0px;color:#222">New South Wales</div></div><div class="r" style="left:1073px;top:196px;width:162px;height:14px;overflow:hidden"><div class="t" style="left:1.5px;top:3.04px;font-size:10.0px;line-height:10.0px;letter-spacing:0px;color:#222">Australia</div></div><div class="r" style="left:1236px;top:196px;width:79px;height:14px;overflow:hidden"><div class="t" style="left:1.5px;top:3.04px;font-size:10.0px;line-height:10.0px;letter-spacing:0px;color:#222">Oceania</div></div><div class="r" style="left:0px;top:225px;width:18px;height:1px;background:#d0d0d0;"></div><div class="r" style="left:19px;top:225px;width:1261px;height:1px;background:#e0e0e0;"></div><div class="r" style="left:0;top:211px;width:18px;height:14px;overflow:hidden"><div class="t" style="left:0;width:18px;text-align:center;top:3.04px;font-size:10px;line-height:10px;color:#3a3a3a">4</div></div><div class="r" style="left:19px;top:211px;width:46px;height:14px;overflow:hidden"><div class="t" style="right:1.30px;top:3.04px;font-size:10.0px;line-height:10.0px;letter-spacing:-0.3px;color:#222">25330</div></div><div class="r" style="left:66px;top:211px;width:116px;height:14px;overflow:hidden"><div class="t" style="left:1.5px;top:3.04px;font-size:10.0px;line-height:10.0px;letter-spacing:0px;color:#222">Craig Reiter</div></div><div class="r" style="left:183px;top:211px;width:66px;height:14px;overflow:hidden"><div class="t" style="right:0.70px;top:3.04px;font-size:10.0px;line-height:10.0px;letter-spacing:0.3px;color:#222">10/17/2014</div></div><div class="r" style="left:250px;top:211px;width:59px;height:14px;overflow:hidden"><div class="t" style="right:0.70px;top:3.04px;font-size:10.0px;line-height:10.0px;letter-spacing:0.3px;color:#222">10/18/2014</div></div><div class="r" style="left:310px;top:211px;width:137px;height:14px;overflow:hidden"><div class="t" style="left:1.5px;top:3.04px;font-size:10.0px;line-height:10.0px;letter-spacing:-0.32px;color:#222">IN-2014-CR127307-41929</div></div><div class="r" style="left:448px;top:211px;width:70px;height:14px;overflow:hidden"><div class="t" style="left:1.5px;top:3.04px;font-size:10.0px;line-height:10.0px;letter-spacing:-0.25px;color:#222">First Class</div></div><div class="r" style="left:519px;top:211px;width:73px;height:14px;overflow:hidden"><div class="t" style="left:1.5px;top:3.04px;font-size:10.0px;line-height:10.0px;letter-spacing:-0.3px;color:#222">CR-127307</div></div><div class="r" style="left:593px;top:211px;width:62px;height:14px;overflow:hidden"><div class="t" style="left:1.5px;top:3.04px;font-size:10.0px;line-height:10.0px;letter-spacing:0px;color:#222">Consumer</div></div><div class="r" style="left:714px;top:211px;width:176px;height:14px;overflow:hidden"><div class="t" style="left:1.5px;top:3.04px;font-size:10.0px;line-height:10.0px;letter-spacing:0px;color:#222">Brisbane</div></div><div class="r" style="left:891px;top:211px;width:181px;height:14px;overflow:hidden"><div class="t" style="left:1.5px;top:3.04px;font-size:10.0px;line-height:10.0px;letter-spacing:0px;color:#222">Queensland</div></div><div class="r" style="left:1073px;top:211px;width:162px;height:14px;overflow:hidden"><div class="t" style="left:1.5px;top:3.04px;font-size:10.0px;line-height:10.0px;letter-spacing:0px;color:#222">Australia</div></div><div class="r" style="left:1236px;top:211px;width:79px;height:14px;overflow:hidden"><div class="t" style="left:1.5px;top:3.04px;font-size:10.0px;line-height:10.0px;letter-spacing:0px;color:#222">Oceania</div></div><div class="r" style="left:0px;top:239px;width:18px;height:1px;background:#d0d0d0;"></div><div class="r" style="left:19px;top:239px;width:1261px;height:1px;background:#e0e0e0;"></div><div class="r" style="left:0;top:226px;width:18px;height:13px;overflow:hidden"><div class="t" style="left:0;width:18px;text-align:center;top:2.04px;font-size:10px;line-height:10px;color:#3a3a3a">5</div></div><div class="r" style="left:19px;top:226px;width:46px;height:13px;overflow:hidden"><div class="t" style="right:1.30px;top:2.04px;font-size:10.0px;line-height:10.0px;letter-spacing:-0.3px;color:#222">13524</div></div><div class="r" style="left:66px;top:226px;width:116px;height:13px;overflow:hidden"><div class="t" style="left:1.5px;top:2.04px;font-size:10.0px;line-height:10.0px;letter-spacing:0px;color:#222">Katherine Murray</div></div><div class="r" style="left:183px;top:226px;width:66px;height:13px;overflow:hidden"><div class="t" style="right:0.70px;top:2.04px;font-size:10.0px;line-height:10.0px;letter-spacing:0.3px;color:#222">1/28/2014</div></div><div class="r" style="left:250px;top:226px;width:59px;height:13px;overflow:hidden"><div class="t" style="right:0.70px;top:2.04px;font-size:10.0px;line-height:10.0px;letter-spacing:0.3px;color:#222">1/30/2014</div></div><div class="r" style="left:310px;top:226px;width:137px;height:13px;overflow:hidden"><div class="t" style="left:1.5px;top:2.04px;font-size:10.0px;line-height:10.0px;letter-spacing:-0.32px;color:#222">ES-2014-KM1637548-41667</div></div><div class="r" style="left:448px;top:226px;width:70px;height:13px;overflow:hidden"><div class="t" style="left:1.5px;top:2.04px;font-size:10.0px;line-height:10.0px;letter-spacing:-0.25px;color:#222">First Class</div></div><div class="r" style="left:519px;top:226px;width:73px;height:13px;overflow:hidden"><div class="t" style="left:1.5px;top:2.04px;font-size:10.0px;line-height:10.0px;letter-spacing:-0.3px;color:#222">KM-1637548</div></div><div class="r" style="left:593px;top:226px;width:62px;height:13px;overflow:hidden"><div class="t" style="left:1.5px;top:2.04px;font-size:10.0px;line-height:10.0px;letter-spacing:0px;color:#222">Home Office</div></div><div class="r" style="left:714px;top:226px;width:176px;height:13px;overflow:hidden"><div class="t" style="left:1.5px;top:2.04px;font-size:10.0px;line-height:10.0px;letter-spacing:0px;color:#222">Berlin</div></div><div class="r" style="left:891px;top:226px;width:181px;height:13px;overflow:hidden"><div class="t" style="left:1.5px;top:2.04px;font-size:10.0px;line-height:10.0px;letter-spacing:0px;color:#222">Berlin</div></div><div class="r" style="left:1073px;top:226px;width:162px;height:13px;overflow:hidden"><div class="t" style="left:1.5px;top:2.04px;font-size:10.0px;line-height:10.0px;letter-spacing:0px;color:#222">Germany</div></div><div class="r" style="left:1236px;top:226px;width:79px;height:13px;overflow:hidden"><div class="t" style="left:1.5px;top:2.04px;font-size:10.0px;line-height:10.0px;letter-spacing:0px;color:#222">Western Europe</div></div><div class="r" style="left:0px;top:253px;width:18px;height:1px;background:#d0d0d0;"></div><div class="r" style="left:19px;top:253px;width:1261px;height:1px;background:#e0e0e0;"></div><div class="r" style="left:0;top:240px;width:18px;height:13px;overflow:hidden"><div class="t" style="left:0;width:18px;text-align:center;top:2.04px;font-size:10px;line-height:10px;color:#3a3a3a">6</div></div><div class="r" style="left:19px;top:240px;width:46px;height:13px;overflow:hidden"><div class="t" style="right:1.30px;top:2.04px;font-size:10.0px;line-height:10.0px;letter-spacing:-0.3px;color:#222">47221</div></div><div class="r" style="left:66px;top:240px;width:116px;height:13px;overflow:hidden"><div class="t" style="left:1.5px;top:2.04px;font-size:10.0px;line-height:10.0px;letter-spacing:0px;color:#222">Rick Hansen</div></div><div class="r" style="left:183px;top:240px;width:66px;height:13px;overflow:hidden"><div class="t" style="right:0.70px;top:2.04px;font-size:10.0px;line-height:10.0px;letter-spacing:0.3px;color:#222">11/5/2014</div></div><div class="r" style="left:250px;top:240px;width:59px;height:13px;overflow:hidden"><div class="t" style="right:0.70px;top:2.04px;font-size:10.0px;line-height:10.0px;letter-spacing:0.3px;color:#222">11/6/2014</div></div><div class="r" style="left:310px;top:240px;width:137px;height:13px;overflow:hidden"><div class="t" style="left:1.5px;top:2.04px;font-size:10.0px;line-height:10.0px;letter-spacing:-0.32px;color:#222">SG-2014-RH9495111-41948</div></div><div class="r" style="left:448px;top:240px;width:70px;height:13px;overflow:hidden"><div class="t" style="left:1.5px;top:2.04px;font-size:10.0px;line-height:10.0px;letter-spacing:-0.25px;color:#222">Same Day</div></div><div class="r" style="left:519px;top:240px;width:73px;height:13px;overflow:hidden"><div class="t" style="left:1.5px;top:2.04px;font-size:10.0px;line-height:10.0px;letter-spacing:-0.3px;color:#222">RH-9495111</div></div><div class="r" style="left:593px;top:240px;width:62px;height:13px;overflow:hidden"><div class="t" style="left:1.5px;top:2.04px;font-size:10.0px;line-height:10.0px;letter-spacing:0px;color:#222">Consumer</div></div><div class="r" style="left:714px;top:240px;width:176px;height:13px;overflow:hidden"><div class="t" style="left:1.5px;top:2.04px;font-size:10.0px;line-height:10.0px;letter-spacing:0px;color:#222">Dakar</div></div><div class="r" style="left:891px;top:240px;width:181px;height:13px;overflow:hidden"><div class="t" style="left:1.5px;top:2.04px;font-size:10.0px;line-height:10.0px;letter-spacing:0px;color:#222">Dakar</div></div><div class="r" style="left:1073px;top:240px;width:162px;height:13px;overflow:hidden"><div class="t" style="left:1.5px;top:2.04px;font-size:10.0px;line-height:10.0px;letter-spacing:0px;color:#222">Senegal</div></div><div class="r" style="left:1236px;top:240px;width:79px;height:13px;overflow:hidden"><div class="t" style="left:1.5px;top:2.04px;font-size:10.0px;line-height:10.0px;letter-spacing:0px;color:#222">Western Africa</div></div><div class="r" style="left:0px;top:268px;width:18px;height:1px;background:#d0d0d0;"></div><div class="r" style="left:19px;top:268px;width:1261px;height:1px;background:#e0e0e0;"></div><div class="r" style="left:0;top:254px;width:18px;height:14px;overflow:hidden"><div class="t" style="left:0;width:18px;text-align:center;top:3.04px;font-size:10px;line-height:10px;color:#3a3a3a">7</div></div><div class="r" style="left:19px;top:254px;width:46px;height:14px;overflow:hidden"><div class="t" style="right:1.30px;top:3.04px;font-size:10.0px;line-height:10.0px;letter-spacing:-0.3px;color:#222">22732</div></div><div class="r" style="left:66px;top:254px;width:116px;height:14px;overflow:hidden"><div class="t" style="left:1.5px;top:3.04px;font-size:10.0px;line-height:10.0px;letter-spacing:0px;color:#222">Jim Mitchum</div></div><div class="r" style="left:183px;top:254px;width:66px;height:14px;overflow:hidden"><div class="t" style="right:0.70px;top:3.04px;font-size:10.0px;line-height:10.0px;letter-spacing:0.3px;color:#222">6/28/2014</div></div><div class="r" style="left:250px;top:254px;width:59px;height:14px;overflow:hidden"><div class="t" style="right:0.70px;top:3.04px;font-size:10.0px;line-height:10.0px;letter-spacing:0.3px;color:#222">7/1/2014</div></div><div class="r" style="left:310px;top:254px;width:137px;height:14px;overflow:hidden"><div class="t" style="left:1.5px;top:3.04px;font-size:10.0px;line-height:10.0px;letter-spacing:-0.32px;color:#222">IN-2014-JM156557-41818</div></div><div class="r" style="left:448px;top:254px;width:70px;height:14px;overflow:hidden"><div class="t" style="left:1.5px;top:3.04px;font-size:10.0px;line-height:10.0px;letter-spacing:-0.25px;color:#222">Second Class</div></div><div class="r" style="left:519px;top:254px;width:73px;height:14px;overflow:hidden"><div class="t" style="left:1.5px;top:3.04px;font-size:10.0px;line-height:10.0px;letter-spacing:-0.3px;color:#222">JM-156557</div></div><div class="r" style="left:593px;top:254px;width:62px;height:14px;overflow:hidden"><div class="t" style="left:1.5px;top:3.04px;font-size:10.0px;line-height:10.0px;letter-spacing:0px;color:#222">Corporate</div></div><div class="r" style="left:714px;top:254px;width:176px;height:14px;overflow:hidden"><div class="t" style="left:1.5px;top:3.04px;font-size:10.0px;line-height:10.0px;letter-spacing:0px;color:#222">Sydney</div></div><div class="r" style="left:891px;top:254px;width:181px;height:14px;overflow:hidden"><div class="t" style="left:1.5px;top:3.04px;font-size:10.0px;line-height:10.0px;letter-spacing:0px;color:#222">New South Wales</div></div><div class="r" style="left:1073px;top:254px;width:162px;height:14px;overflow:hidden"><div class="t" style="left:1.5px;top:3.04px;font-size:10.0px;line-height:10.0px;letter-spacing:0px;color:#222">Australia</div></div><div class="r" style="left:1236px;top:254px;width:79px;height:14px;overflow:hidden"><div class="t" style="left:1.5px;top:3.04px;font-size:10.0px;line-height:10.0px;letter-spacing:0px;color:#222">Oceania</div></div><div class="r" style="left:0px;top:277px;width:18px;height:1px;background:#d0d0d0;"></div><div class="r" style="left:19px;top:277px;width:1261px;height:1px;background:#e0e0e0;"></div><div class="r" style="left:0px;top:269px;width:18px;height:9px;background:#d2efdf;"></div><div class="r" style="left:0;top:269px;width:18px;height:8px;overflow:hidden"><div class="t" style="left:0;width:18px;text-align:center;top:-2.96px;font-size:10px;line-height:10px;color:#2f7048">8</div></div><div class="r" style="left:65px;top:269px;width:1215px;height:8px;background:#c6c9c6;"></div><div class="r" style="left:19px;top:269px;width:46px;height:8px;overflow:hidden"><div class="t" style="right:1.30px;top:-2.96px;font-size:10.0px;line-height:10.0px;letter-spacing:-0.3px;color:#222">30570</div></div><div class="r" style="left:66px;top:269px;width:116px;height:8px;overflow:hidden"><div class="t" style="left:1.5px;top:-2.96px;font-size:10.0px;line-height:10.0px;letter-spacing:0px;color:#222">Toby Swindell</div></div><div class="r" style="left:183px;top:269px;width:66px;height:8px;overflow:hidden"><div class="t" style="right:0.70px;top:-2.96px;font-size:10.0px;line-height:10.0px;letter-spacing:0.3px;color:#222">11/6/2012</div></div><div class="r" style="left:250px;top:269px;width:59px;height:8px;overflow:hidden"><div class="t" style="right:0.70px;top:-2.96px;font-size:10.0px;line-height:10.0px;letter-spacing:0.3px;color:#222">11/8/2012</div></div><div class="r" style="left:310px;top:269px;width:137px;height:8px;overflow:hidden"><div class="t" style="left:1.5px;top:-2.96px;font-size:10.0px;line-height:10.0px;letter-spacing:-0.32px;color:#222">IN-2012-TS2154092-41215</div></div><div class="r" style="left:448px;top:269px;width:70px;height:8px;overflow:hidden"><div class="t" style="left:1.5px;top:-2.96px;font-size:10.0px;line-height:10.0px;letter-spacing:-0.25px;color:#222">First Class</div></div><div class="r" style="left:519px;top:269px;width:73px;height:8px;overflow:hidden"><div class="t" style="left:1.5px;top:-2.96px;font-size:10.0px;line-height:10.0px;letter-spacing:-0.3px;color:#222">TS-2154092</div></div><div class="r" style="left:593px;top:269px;width:62px;height:8px;overflow:hidden"><div class="t" style="left:1.5px;top:-2.96px;font-size:10.0px;line-height:10.0px;letter-spacing:0px;color:#222">Consumer</div></div><div class="r" style="left:714px;top:269px;width:176px;height:8px;overflow:hidden"><div class="t" style="left:1.5px;top:-2.96px;font-size:10.0px;line-height:10.0px;letter-spacing:0px;color:#222">Porirua</div></div><div class="r" style="left:891px;top:269px;width:181px;height:8px;overflow:hidden"><div class="t" style="left:1.5px;top:-2.96px;font-size:10.0px;line-height:10.0px;letter-spacing:0px;color:#222">Wellington</div></div><div class="r" style="left:1073px;top:269px;width:162px;height:8px;overflow:hidden"><div class="t" style="left:1.5px;top:-2.96px;font-size:10.0px;line-height:10.0px;letter-spacing:0px;color:#222">New Zealand</div></div><div class="r" style="left:1236px;top:269px;width:79px;height:8px;overflow:hidden"><div class="t" style="left:1.5px;top:-2.96px;font-size:10.0px;line-height:10.0px;letter-spacing:0px;color:#222">Oceania</div></div><div class="r" style="left:0px;top:291px;width:18px;height:1px;background:#d0d0d0;"></div><div class="r" style="left:19px;top:291px;width:1261px;height:1px;background:#e0e0e0;"></div><div class="r" style="left:0;top:278px;width:18px;height:13px;overflow:hidden"><div class="t" style="left:0;width:18px;text-align:center;top:2.04px;font-size:10px;line-height:10px;color:#3a3a3a">9</div></div><div class="r" style="left:19px;top:278px;width:46px;height:13px;overflow:hidden"><div class="t" style="right:1.30px;top:2.04px;font-size:10.0px;line-height:10.0px;letter-spacing:-0.3px;color:#222">31192</div></div><div class="r" style="left:66px;top:278px;width:116px;height:13px;overflow:hidden"><div class="t" style="left:1.5px;top:2.04px;font-size:10.0px;line-height:10.0px;letter-spacing:0px;color:#222">Mick Brown</div></div><div class="r" style="left:183px;top:278px;width:66px;height:13px;overflow:hidden"><div class="t" style="right:0.70px;top:2.04px;font-size:10.0px;line-height:10.0px;letter-spacing:0.3px;color:#222">4/14/2013</div></div><div class="r" style="left:250px;top:278px;width:59px;height:13px;overflow:hidden"><div class="t" style="right:0.70px;top:2.04px;font-size:10.0px;line-height:10.0px;letter-spacing:0.3px;color:#222">4/18/2013</div></div><div class="r" style="left:310px;top:278px;width:137px;height:13px;overflow:hidden"><div class="t" style="left:1.5px;top:2.04px;font-size:10.0px;line-height:10.0px;letter-spacing:-0.32px;color:#222">IN-2013-MB1808592-41378</div></div><div class="r" style="left:448px;top:278px;width:70px;height:13px;overflow:hidden"><div class="t" style="left:1.5px;top:2.04px;font-size:10.0px;line-height:10.0px;letter-spacing:-0.25px;color:#222">Standard Class</div></div><div class="r" style="left:519px;top:278px;width:73px;height:13px;overflow:hidden"><div class="t" style="left:1.5px;top:2.04px;font-size:10.0px;line-height:10.0px;letter-spacing:-0.3px;color:#222">MB-1808592</div></div><div class="r" style="left:593px;top:278px;width:62px;height:13px;overflow:hidden"><div class="t" style="left:1.5px;top:2.04px;font-size:10.0px;line-height:10.0px;letter-spacing:0px;color:#222">Consumer</div></div><div class="r" style="left:714px;top:278px;width:176px;height:13px;overflow:hidden"><div class="t" style="left:1.5px;top:2.04px;font-size:10.0px;line-height:10.0px;letter-spacing:0px;color:#222">Hamilton</div></div><div class="r" style="left:891px;top:278px;width:181px;height:13px;overflow:hidden"><div class="t" style="left:1.5px;top:2.04px;font-size:10.0px;line-height:10.0px;letter-spacing:0px;color:#222">Waikato</div></div><div class="r" style="left:1073px;top:278px;width:162px;height:13px;overflow:hidden"><div class="t" style="left:1.5px;top:2.04px;font-size:10.0px;line-height:10.0px;letter-spacing:0px;color:#222">New Zealand</div></div><div class="r" style="left:1236px;top:278px;width:79px;height:13px;overflow:hidden"><div class="t" style="left:1.5px;top:2.04px;font-size:10.0px;line-height:10.0px;letter-spacing:0px;color:#222">Oceania</div></div><div class="r" style="left:0px;top:306px;width:18px;height:1px;background:#d0d0d0;"></div><div class="r" style="left:19px;top:306px;width:1261px;height:1px;background:#e0e0e0;"></div><div class="r" style="left:0;top:292px;width:18px;height:14px;overflow:hidden"><div class="t" style="left:0;width:18px;text-align:center;top:3.04px;font-size:10px;line-height:10px;color:#3a3a3a">10</div></div><div class="r" style="left:19px;top:292px;width:46px;height:14px;overflow:hidden"><div class="t" style="right:1.30px;top:3.04px;font-size:10.0px;line-height:10.0px;letter-spacing:-0.3px;color:#222">40099</div></div><div class="r" style="left:66px;top:292px;width:116px;height:14px;overflow:hidden"><div class="t" style="left:1.5px;top:3.04px;font-size:10.0px;line-height:10.0px;letter-spacing:0px;color:#222">Aaron Bergman</div></div><div class="r" style="left:183px;top:292px;width:66px;height:14px;overflow:hidden"><div class="t" style="right:0.70px;top:3.04px;font-size:10.0px;line-height:10.0px;letter-spacing:0.3px;color:#222">11/11/2014</div></div><div class="r" style="left:250px;top:292px;width:59px;height:14px;overflow:hidden"><div class="t" style="right:0.70px;top:3.04px;font-size:10.0px;line-height:10.0px;letter-spacing:0.3px;color:#222">11/13/2014</div></div><div class="r" style="left:310px;top:292px;width:137px;height:14px;overflow:hidden"><div class="t" style="left:1.5px;top:3.04px;font-size:10.0px;line-height:10.0px;letter-spacing:-0.32px;color:#222">CA-2014-AB10015140-41954</div></div><div class="r" style="left:448px;top:292px;width:70px;height:14px;overflow:hidden"><div class="t" style="left:1.5px;top:3.04px;font-size:10.0px;line-height:10.0px;letter-spacing:-0.25px;color:#222">First Class</div></div><div class="r" style="left:519px;top:292px;width:73px;height:14px;overflow:hidden"><div class="t" style="left:1.5px;top:3.04px;font-size:10.0px;line-height:10.0px;letter-spacing:-0.3px;color:#222">AB-100151402</div></div><div class="r" style="left:593px;top:292px;width:62px;height:14px;overflow:hidden"><div class="t" style="left:1.5px;top:3.04px;font-size:10.0px;line-height:10.0px;letter-spacing:0px;color:#222">Consumer</div></div><div class="r" style="left:656px;top:292px;width:57px;height:14px;overflow:hidden"><div class="t" style="right:1.30px;top:3.04px;font-size:10.0px;line-height:10.0px;letter-spacing:-0.3px;color:#222">73120</div></div><div class="r" style="left:714px;top:292px;width:176px;height:14px;overflow:hidden"><div class="t" style="left:1.5px;top:3.04px;font-size:10.0px;line-height:10.0px;letter-spacing:0px;color:#222">Oklahoma City</div></div><div class="r" style="left:891px;top:292px;width:181px;height:14px;overflow:hidden"><div class="t" style="left:1.5px;top:3.04px;font-size:10.0px;line-height:10.0px;letter-spacing:0px;color:#222">Oklahoma</div></div><div class="r" style="left:1073px;top:292px;width:162px;height:14px;overflow:hidden"><div class="t" style="left:1.5px;top:3.04px;font-size:10.0px;line-height:10.0px;letter-spacing:0px;color:#222">United States</div></div><div class="r" style="left:1236px;top:292px;width:79px;height:14px;overflow:hidden"><div class="t" style="left:1.5px;top:3.04px;font-size:10.0px;line-height:10.0px;letter-spacing:0px;color:#222">Central US</div></div><div class="r" style="left:0px;top:321px;width:18px;height:1px;background:#d0d0d0;"></div><div class="r" style="left:19px;top:321px;width:1261px;height:1px;background:#e0e0e0;"></div><div class="r" style="left:0;top:307px;width:18px;height:14px;overflow:hidden"><div class="t" style="left:0;width:18px;text-align:center;top:3.04px;font-size:10px;line-height:10px;color:#3a3a3a">11</div></div><div class="r" style="left:19px;top:307px;width:46px;height:14px;overflow:hidden"><div class="t" style="right:1.30px;top:3.04px;font-size:10.0px;line-height:10.0px;letter-spacing:-0.3px;color:#222">36258</div></div><div class="r" style="left:66px;top:307px;width:116px;height:14px;overflow:hidden"><div class="t" style="left:1.5px;top:3.04px;font-size:10.0px;line-height:10.0px;letter-spacing:0px;color:#222">Aaron Bergman</div></div><div class="r" style="left:183px;top:307px;width:66px;height:14px;overflow:hidden"><div class="t" style="right:0.70px;top:3.04px;font-size:10.0px;line-height:10.0px;letter-spacing:0.3px;color:#222">3/6/2012</div></div><div class="r" style="left:250px;top:307px;width:59px;height:14px;overflow:hidden"><div class="t" style="right:0.70px;top:3.04px;font-size:10.0px;line-height:10.0px;letter-spacing:0.3px;color:#222">3/7/2012</div></div><div class="r" style="left:310px;top:307px;width:137px;height:14px;overflow:hidden"><div class="t" style="left:1.5px;top:3.04px;font-size:10.0px;line-height:10.0px;letter-spacing:-0.32px;color:#222">CA-2012-AB10015140-40974</div></div><div class="r" style="left:448px;top:307px;width:70px;height:14px;overflow:hidden"><div class="t" style="left:1.5px;top:3.04px;font-size:10.0px;line-height:10.0px;letter-spacing:-0.25px;color:#222">First Class</div></div><div class="r" style="left:519px;top:307px;width:73px;height:14px;overflow:hidden"><div class="t" style="left:1.5px;top:3.04px;font-size:10.0px;line-height:10.0px;letter-spacing:-0.3px;color:#222">AB-100151404</div></div><div class="r" style="left:593px;top:307px;width:62px;height:14px;overflow:hidden"><div class="t" style="left:1.5px;top:3.04px;font-size:10.0px;line-height:10.0px;letter-spacing:0px;color:#222">Consumer</div></div><div class="r" style="left:656px;top:307px;width:57px;height:14px;overflow:hidden"><div class="t" style="right:1.30px;top:3.04px;font-size:10.0px;line-height:10.0px;letter-spacing:-0.3px;color:#222">98103</div></div><div class="r" style="left:714px;top:307px;width:176px;height:14px;overflow:hidden"><div class="t" style="left:1.5px;top:3.04px;font-size:10.0px;line-height:10.0px;letter-spacing:0px;color:#222">Seattle</div></div><div class="r" style="left:891px;top:307px;width:181px;height:14px;overflow:hidden"><div class="t" style="left:1.5px;top:3.04px;font-size:10.0px;line-height:10.0px;letter-spacing:0px;color:#222">Washington</div></div><div class="r" style="left:1073px;top:307px;width:162px;height:14px;overflow:hidden"><div class="t" style="left:1.5px;top:3.04px;font-size:10.0px;line-height:10.0px;letter-spacing:0px;color:#222">United States</div></div><div class="r" style="left:1236px;top:307px;width:79px;height:14px;overflow:hidden"><div class="t" style="left:1.5px;top:3.04px;font-size:10.0px;line-height:10.0px;letter-spacing:0px;color:#222">Western US</div></div><div class="r" style="left:0px;top:335px;width:18px;height:1px;background:#d0d0d0;"></div><div class="r" style="left:19px;top:335px;width:1261px;height:1px;background:#e0e0e0;"></div><div class="r" style="left:0;top:322px;width:18px;height:13px;overflow:hidden"><div class="t" style="left:0;width:18px;text-align:center;top:2.04px;font-size:10px;line-height:10px;color:#3a3a3a">12</div></div><div class="r" style="left:19px;top:322px;width:46px;height:13px;overflow:hidden"><div class="t" style="right:1.30px;top:2.04px;font-size:10.0px;line-height:10.0px;letter-spacing:-0.3px;color:#222">36259</div></div><div class="r" style="left:66px;top:322px;width:116px;height:13px;overflow:hidden"><div class="t" style="left:1.5px;top:2.04px;font-size:10.0px;line-height:10.0px;letter-spacing:0px;color:#222">Aaron Bergman</div></div><div class="r" style="left:183px;top:322px;width:66px;height:13px;overflow:hidden"><div class="t" style="right:0.70px;top:2.04px;font-size:10.0px;line-height:10.0px;letter-spacing:0.3px;color:#222">3/6/2012</div></div><div class="r" style="left:250px;top:322px;width:59px;height:13px;overflow:hidden"><div class="t" style="right:0.70px;top:2.04px;font-size:10.0px;line-height:10.0px;letter-spacing:0.3px;color:#222">3/7/2012</div></div><div class="r" style="left:310px;top:322px;width:137px;height:13px;overflow:hidden"><div class="t" style="left:1.5px;top:2.04px;font-size:10.0px;line-height:10.0px;letter-spacing:-0.32px;color:#222">CA-2012-AB10015140-40974</div></div><div class="r" style="left:448px;top:322px;width:70px;height:13px;overflow:hidden"><div class="t" style="left:1.5px;top:2.04px;font-size:10.0px;line-height:10.0px;letter-spacing:-0.25px;color:#222">First Class</div></div><div class="r" style="left:519px;top:322px;width:73px;height:13px;overflow:hidden"><div class="t" style="left:1.5px;top:2.04px;font-size:10.0px;line-height:10.0px;letter-spacing:-0.3px;color:#222">AB-100151404</div></div><div class="r" style="left:593px;top:322px;width:62px;height:13px;overflow:hidden"><div class="t" style="left:1.5px;top:2.04px;font-size:10.0px;line-height:10.0px;letter-spacing:0px;color:#222">Consumer</div></div><div class="r" style="left:656px;top:322px;width:57px;height:13px;overflow:hidden"><div class="t" style="right:1.30px;top:2.04px;font-size:10.0px;line-height:10.0px;letter-spacing:-0.3px;color:#222">98103</div></div><div class="r" style="left:714px;top:322px;width:176px;height:13px;overflow:hidden"><div class="t" style="left:1.5px;top:2.04px;font-size:10.0px;line-height:10.0px;letter-spacing:0px;color:#222">Seattle</div></div><div class="r" style="left:891px;top:322px;width:181px;height:13px;overflow:hidden"><div class="t" style="left:1.5px;top:2.04px;font-size:10.0px;line-height:10.0px;letter-spacing:0px;color:#222">Washington</div></div><div class="r" style="left:1073px;top:322px;width:162px;height:13px;overflow:hidden"><div class="t" style="left:1.5px;top:2.04px;font-size:10.0px;line-height:10.0px;letter-spacing:0px;color:#222">United States</div></div><div class="r" style="left:1236px;top:322px;width:79px;height:13px;overflow:hidden"><div class="t" style="left:1.5px;top:2.04px;font-size:10.0px;line-height:10.0px;letter-spacing:0px;color:#222">Western US</div></div><div class="r" style="left:0px;top:350px;width:18px;height:1px;background:#d0d0d0;"></div><div class="r" style="left:19px;top:350px;width:1261px;height:1px;background:#e0e0e0;"></div><div class="r" style="left:0;top:336px;width:18px;height:14px;overflow:hidden"><div class="t" style="left:0;width:18px;text-align:center;top:3.04px;font-size:10px;line-height:10px;color:#3a3a3a">13</div></div><div class="r" style="left:19px;top:336px;width:46px;height:14px;overflow:hidden"><div class="t" style="right:1.30px;top:3.04px;font-size:10.0px;line-height:10.0px;letter-spacing:-0.3px;color:#222">28879</div></div><div class="r" style="left:66px;top:336px;width:116px;height:14px;overflow:hidden"><div class="t" style="left:1.5px;top:3.04px;font-size:10.0px;line-height:10.0px;letter-spacing:0px;color:#222">Anthony Jacobs</div></div><div class="r" style="left:183px;top:336px;width:66px;height:14px;overflow:hidden"><div class="t" style="right:0.70px;top:3.04px;font-size:10.0px;line-height:10.0px;letter-spacing:0.3px;color:#222">4/19/2013</div></div><div class="r" style="left:250px;top:336px;width:59px;height:14px;overflow:hidden"><div class="t" style="right:0.70px;top:3.04px;font-size:10.0px;line-height:10.0px;letter-spacing:0.3px;color:#222">4/22/2013</div></div><div class="r" style="left:310px;top:336px;width:137px;height:14px;overflow:hidden"><div class="t" style="left:1.5px;top:3.04px;font-size:10.0px;line-height:10.0px;letter-spacing:-0.32px;color:#222">ID-2013-AJ107801-41383</div></div><div class="r" style="left:448px;top:336px;width:70px;height:14px;overflow:hidden"><div class="t" style="left:1.5px;top:3.04px;font-size:10.0px;line-height:10.0px;letter-spacing:-0.25px;color:#222">First Class</div></div><div class="r" style="left:519px;top:336px;width:73px;height:14px;overflow:hidden"><div class="t" style="left:1.5px;top:3.04px;font-size:10.0px;line-height:10.0px;letter-spacing:-0.3px;color:#222">AJ-107801</div></div><div class="r" style="left:593px;top:336px;width:62px;height:14px;overflow:hidden"><div class="t" style="left:1.5px;top:3.04px;font-size:10.0px;line-height:10.0px;letter-spacing:0px;color:#222">Corporate</div></div><div class="r" style="left:714px;top:336px;width:176px;height:14px;overflow:hidden"><div class="t" style="left:1.5px;top:3.04px;font-size:10.0px;line-height:10.0px;letter-spacing:0px;color:#222">Kabul</div></div><div class="r" style="left:891px;top:336px;width:181px;height:14px;overflow:hidden"><div class="t" style="left:1.5px;top:3.04px;font-size:10.0px;line-height:10.0px;letter-spacing:0px;color:#222">Kabul</div></div><div class="r" style="left:1073px;top:336px;width:162px;height:14px;overflow:hidden"><div class="t" style="left:1.5px;top:3.04px;font-size:10.0px;line-height:10.0px;letter-spacing:0px;color:#222">Afghanistan</div></div><div class="r" style="left:1236px;top:336px;width:79px;height:14px;overflow:hidden"><div class="t" style="left:1.5px;top:3.04px;font-size:10.0px;line-height:10.0px;letter-spacing:0px;color:#222">Southern Asia</div></div><div class="r" style="left:0px;top:358px;width:18px;height:1px;background:#d0d0d0;"></div><div class="r" style="left:19px;top:358px;width:1261px;height:1px;background:#e0e0e0;"></div><div class="r" style="left:0;top:351px;width:18px;height:7px;overflow:hidden"><div class="t" style="left:0;width:18px;text-align:center;top:-3.96px;font-size:10px;line-height:10px;color:#3a3a3a">14</div></div><div class="r" style="left:19px;top:351px;width:46px;height:7px;overflow:hidden"><div class="t" style="right:1.30px;top:-3.96px;font-size:10.0px;line-height:10.0px;letter-spacing:-0.3px;color:#222">45794</div></div><div class="r" style="left:66px;top:351px;width:116px;height:7px;overflow:hidden"><div class="t" style="left:1.5px;top:-3.96px;font-size:10.0px;line-height:10.0px;letter-spacing:0px;color:#222">Magdelene Morse</div></div><div class="r" style="left:183px;top:351px;width:66px;height:7px;overflow:hidden"><div class="t" style="right:0.70px;top:-3.96px;font-size:10.0px;line-height:10.0px;letter-spacing:0.3px;color:#222">12/26/2012</div></div><div class="r" style="left:250px;top:351px;width:59px;height:7px;overflow:hidden"><div class="t" style="right:0.70px;top:-3.96px;font-size:10.0px;line-height:10.0px;letter-spacing:0.3px;color:#222">12/28/2012</div></div><div class="r" style="left:310px;top:351px;width:137px;height:7px;overflow:hidden"><div class="t" style="left:1.5px;top:-3.96px;font-size:10.0px;line-height:10.0px;letter-spacing:-0.32px;color:#222">SA-2012-MM7260110-41269</div></div><div class="r" style="left:448px;top:351px;width:70px;height:7px;overflow:hidden"><div class="t" style="left:1.5px;top:-3.96px;font-size:10.0px;line-height:10.0px;letter-spacing:-0.25px;color:#222">Second Class</div></div><div class="r" style="left:519px;top:351px;width:73px;height:7px;overflow:hidden"><div class="t" style="left:1.5px;top:-3.96px;font-size:10.0px;line-height:10.0px;letter-spacing:-0.3px;color:#222">MM-7260110</div></div><div class="r" style="left:593px;top:351px;width:62px;height:7px;overflow:hidden"><div class="t" style="left:1.5px;top:-3.96px;font-size:10.0px;line-height:10.0px;letter-spacing:0px;color:#222">Consumer</div></div><div class="r" style="left:714px;top:351px;width:176px;height:7px;overflow:hidden"><div class="t" style="left:1.5px;top:-3.96px;font-size:10.0px;line-height:10.0px;letter-spacing:0px;color:#222">Jizan</div></div><div class="r" style="left:891px;top:351px;width:181px;height:7px;overflow:hidden"><div class="t" style="left:1.5px;top:-3.96px;font-size:10.0px;line-height:10.0px;letter-spacing:0px;color:#222">Jizan</div></div><div class="r" style="left:1073px;top:351px;width:162px;height:7px;overflow:hidden"><div class="t" style="left:1.5px;top:-3.96px;font-size:10.0px;line-height:10.0px;letter-spacing:0px;color:#222">Saudi Arabia</div></div><div class="r" style="left:1236px;top:351px;width:79px;height:7px;overflow:hidden"><div class="t" style="left:1.5px;top:-3.96px;font-size:10.0px;line-height:10.0px;letter-spacing:0px;color:#222">Western Asia</div></div><div class="r" style="left:0px;top:373px;width:18px;height:1px;background:#d0d0d0;"></div><div class="r" style="left:19px;top:373px;width:1261px;height:1px;background:#e0e0e0;"></div><div class="r" style="left:0;top:359px;width:18px;height:14px;overflow:hidden"><div class="t" style="left:0;width:18px;text-align:center;top:3.04px;font-size:10px;line-height:10px;color:#3a3a3a">15</div></div><div class="r" style="left:19px;top:359px;width:46px;height:14px;overflow:hidden"><div class="t" style="right:1.30px;top:3.04px;font-size:10.0px;line-height:10.0px;letter-spacing:-0.3px;color:#222">4132</div></div><div class="r" style="left:66px;top:359px;width:116px;height:14px;overflow:hidden"><div class="t" style="left:1.5px;top:3.04px;font-size:10.0px;line-height:10.0px;letter-spacing:0px;color:#222">Vicky Freymann</div></div><div class="r" style="left:183px;top:359px;width:66px;height:14px;overflow:hidden"><div class="t" style="right:0.70px;top:3.04px;font-size:10.0px;line-height:10.0px;letter-spacing:0.3px;color:#222">11/13/2013</div></div><div class="r" style="left:250px;top:359px;width:59px;height:14px;overflow:hidden"><div class="t" style="right:0.70px;top:3.04px;font-size:10.0px;line-height:10.0px;letter-spacing:0.3px;color:#222">11/13/2013</div></div><div class="r" style="left:310px;top:359px;width:137px;height:14px;overflow:hidden"><div class="t" style="left:1.5px;top:3.04px;font-size:10.0px;line-height:10.0px;letter-spacing:-0.32px;color:#222">MX-2013-VF2171518-41591</div></div><div class="r" style="left:448px;top:359px;width:70px;height:14px;overflow:hidden"><div class="t" style="left:1.5px;top:3.04px;font-size:10.0px;line-height:10.0px;letter-spacing:-0.25px;color:#222">Same Day</div></div><div class="r" style="left:519px;top:359px;width:73px;height:14px;overflow:hidden"><div class="t" style="left:1.5px;top:3.04px;font-size:10.0px;line-height:10.0px;letter-spacing:-0.3px;color:#222">VF-2171518</div></div><div class="r" style="left:593px;top:359px;width:62px;height:14px;overflow:hidden"><div class="t" style="left:1.5px;top:3.04px;font-size:10.0px;line-height:10.0px;letter-spacing:0px;color:#222">Home Office</div></div><div class="r" style="left:714px;top:359px;width:176px;height:14px;overflow:hidden"><div class="t" style="left:1.5px;top:3.04px;font-size:10.0px;line-height:10.0px;letter-spacing:0px;color:#222">Toledo</div></div><div class="r" style="left:891px;top:359px;width:181px;height:14px;overflow:hidden"><div class="t" style="left:1.5px;top:3.04px;font-size:10.0px;line-height:10.0px;letter-spacing:0px;color:#222">Parana</div></div><div class="r" style="left:1073px;top:359px;width:162px;height:14px;overflow:hidden"><div class="t" style="left:1.5px;top:3.04px;font-size:10.0px;line-height:10.0px;letter-spacing:0px;color:#222">Brazil</div></div><div class="r" style="left:1236px;top:359px;width:79px;height:14px;overflow:hidden"><div class="t" style="left:1.5px;top:3.04px;font-size:10.0px;line-height:10.0px;letter-spacing:0px;color:#222">South America</div></div><div class="r" style="left:0px;top:388px;width:18px;height:1px;background:#d0d0d0;"></div><div class="r" style="left:19px;top:388px;width:1261px;height:1px;background:#e0e0e0;"></div><div class="r" style="left:0;top:374px;width:18px;height:14px;overflow:hidden"><div class="t" style="left:0;width:18px;text-align:center;top:3.04px;font-size:10px;line-height:10px;color:#3a3a3a">16</div></div><div class="r" style="left:19px;top:374px;width:46px;height:14px;overflow:hidden"><div class="t" style="right:1.30px;top:3.04px;font-size:10.0px;line-height:10.0px;letter-spacing:-0.3px;color:#222">27704</div></div><div class="r" style="left:66px;top:374px;width:116px;height:14px;overflow:hidden"><div class="t" style="left:1.5px;top:3.04px;font-size:10.0px;line-height:10.0px;letter-spacing:0px;color:#222">Peter Fuller</div></div><div class="r" style="left:183px;top:374px;width:66px;height:14px;overflow:hidden"><div class="t" style="right:0.70px;top:3.04px;font-size:10.0px;line-height:10.0px;letter-spacing:0.3px;color:#222">6/6/2014</div></div><div class="r" style="left:250px;top:374px;width:59px;height:14px;overflow:hidden"><div class="t" style="right:0.70px;top:3.04px;font-size:10.0px;line-height:10.0px;letter-spacing:0.3px;color:#222">6/8/2014</div></div><div class="r" style="left:310px;top:374px;width:137px;height:14px;overflow:hidden"><div class="t" style="left:1.5px;top:3.04px;font-size:10.0px;line-height:10.0px;letter-spacing:-0.32px;color:#222">IN-2014-PF1912027-41796</div></div><div class="r" style="left:448px;top:374px;width:70px;height:14px;overflow:hidden"><div class="t" style="left:1.5px;top:3.04px;font-size:10.0px;line-height:10.0px;letter-spacing:-0.25px;color:#222">Second Class</div></div><div class="r" style="left:519px;top:374px;width:73px;height:14px;overflow:hidden"><div class="t" style="left:1.5px;top:3.04px;font-size:10.0px;line-height:10.0px;letter-spacing:-0.3px;color:#222">PF-1912027</div></div><div class="r" style="left:593px;top:374px;width:62px;height:14px;overflow:hidden"><div class="t" style="left:1.5px;top:3.04px;font-size:10.0px;line-height:10.0px;letter-spacing:0px;color:#222">Consumer</div></div><div class="r" style="left:714px;top:374px;width:176px;height:14px;overflow:hidden"><div class="t" style="left:1.5px;top:3.04px;font-size:10.0px;line-height:10.0px;letter-spacing:0px;color:#222">Mudanjiang</div></div><div class="r" style="left:891px;top:374px;width:181px;height:14px;overflow:hidden"><div class="t" style="left:1.5px;top:3.04px;font-size:10.0px;line-height:10.0px;letter-spacing:0px;color:#222">Heilongjiang</div></div><div class="r" style="left:1073px;top:374px;width:162px;height:14px;overflow:hidden"><div class="t" style="left:1.5px;top:3.04px;font-size:10.0px;line-height:10.0px;letter-spacing:0px;color:#222">China</div></div><div class="r" style="left:1236px;top:374px;width:79px;height:14px;overflow:hidden"><div class="t" style="left:1.5px;top:3.04px;font-size:10.0px;line-height:10.0px;letter-spacing:0px;color:#222">Eastern Asia</div></div><div class="r" style="left:0px;top:402px;width:18px;height:1px;background:#d0d0d0;"></div><div class="r" style="left:19px;top:402px;width:1261px;height:1px;background:#e0e0e0;"></div><div class="r" style="left:0;top:389px;width:18px;height:13px;overflow:hidden"><div class="t" style="left:0;width:18px;text-align:center;top:2.04px;font-size:10px;line-height:10px;color:#3a3a3a">17</div></div><div class="r" style="left:19px;top:389px;width:46px;height:13px;overflow:hidden"><div class="t" style="right:1.30px;top:2.04px;font-size:10.0px;line-height:10.0px;letter-spacing:-0.3px;color:#222">13779</div></div><div class="r" style="left:66px;top:389px;width:116px;height:13px;overflow:hidden"><div class="t" style="left:1.5px;top:2.04px;font-size:10.0px;line-height:10.0px;letter-spacing:0px;color:#222">Ben Peterman</div></div><div class="r" style="left:183px;top:389px;width:66px;height:13px;overflow:hidden"><div class="t" style="right:0.70px;top:2.04px;font-size:10.0px;line-height:10.0px;letter-spacing:0.3px;color:#222">7/31/2015</div></div><div class="r" style="left:250px;top:389px;width:59px;height:13px;overflow:hidden"><div class="t" style="right:0.70px;top:2.04px;font-size:10.0px;line-height:10.0px;letter-spacing:0.3px;color:#222">8/3/2015</div></div><div class="r" style="left:310px;top:389px;width:137px;height:13px;overflow:hidden"><div class="t" style="left:1.5px;top:2.04px;font-size:10.0px;line-height:10.0px;letter-spacing:-0.32px;color:#222">ES-2015-BP1118545-42216</div></div><div class="r" style="left:448px;top:389px;width:70px;height:13px;overflow:hidden"><div class="t" style="left:1.5px;top:2.04px;font-size:10.0px;line-height:10.0px;letter-spacing:-0.25px;color:#222">Second Class</div></div><div class="r" style="left:519px;top:389px;width:73px;height:13px;overflow:hidden"><div class="t" style="left:1.5px;top:2.04px;font-size:10.0px;line-height:10.0px;letter-spacing:-0.3px;color:#222">BP-1118545</div></div><div class="r" style="left:593px;top:389px;width:62px;height:13px;overflow:hidden"><div class="t" style="left:1.5px;top:2.04px;font-size:10.0px;line-height:10.0px;letter-spacing:0px;color:#222">Corporate</div></div><div class="r" style="left:714px;top:389px;width:176px;height:13px;overflow:hidden"><div class="t" style="left:1.5px;top:2.04px;font-size:10.0px;line-height:10.0px;letter-spacing:0px;color:#222">Paris</div></div><div class="r" style="left:891px;top:389px;width:181px;height:13px;overflow:hidden"><div class="t" style="left:1.5px;top:2.04px;font-size:10.0px;line-height:10.0px;letter-spacing:0px;color:#222">Ile-de-France</div></div><div class="r" style="left:1073px;top:389px;width:162px;height:13px;overflow:hidden"><div class="t" style="left:1.5px;top:2.04px;font-size:10.0px;line-height:10.0px;letter-spacing:0px;color:#222">France</div></div><div class="r" style="left:1236px;top:389px;width:79px;height:13px;overflow:hidden"><div class="t" style="left:1.5px;top:2.04px;font-size:10.0px;line-height:10.0px;letter-spacing:0px;color:#222">Western Europe</div></div><div class="r" style="left:0px;top:417px;width:18px;height:1px;background:#d0d0d0;"></div><div class="r" style="left:19px;top:417px;width:1261px;height:1px;background:#e0e0e0;"></div><div class="r" style="left:0;top:403px;width:18px;height:14px;overflow:hidden"><div class="t" style="left:0;width:18px;text-align:center;top:3.04px;font-size:10px;line-height:10px;color:#3a3a3a">18</div></div><div class="r" style="left:19px;top:403px;width:46px;height:14px;overflow:hidden"><div class="t" style="right:1.30px;top:3.04px;font-size:10.0px;line-height:10.0px;letter-spacing:-0.3px;color:#222">39519</div></div><div class="r" style="left:66px;top:403px;width:116px;height:14px;overflow:hidden"><div class="t" style="left:1.5px;top:3.04px;font-size:10.0px;line-height:10.0px;letter-spacing:0px;color:#222">Aaron Bergman</div></div><div class="r" style="left:183px;top:403px;width:66px;height:14px;overflow:hidden"><div class="t" style="right:0.70px;top:3.04px;font-size:10.0px;line-height:10.0px;letter-spacing:0.3px;color:#222">2/19/2012</div></div><div class="r" style="left:250px;top:403px;width:59px;height:14px;overflow:hidden"><div class="t" style="right:0.70px;top:3.04px;font-size:10.0px;line-height:10.0px;letter-spacing:0.3px;color:#222">2/25/2012</div></div><div class="r" style="left:310px;top:403px;width:137px;height:14px;overflow:hidden"><div class="t" style="left:1.5px;top:3.04px;font-size:10.0px;line-height:10.0px;letter-spacing:-0.32px;color:#222">CA-2012-AB10015140-40958</div></div><div class="r" style="left:448px;top:403px;width:70px;height:14px;overflow:hidden"><div class="t" style="left:1.5px;top:3.04px;font-size:10.0px;line-height:10.0px;letter-spacing:-0.25px;color:#222">Standard Class</div></div><div class="r" style="left:519px;top:403px;width:73px;height:14px;overflow:hidden"><div class="t" style="left:1.5px;top:3.04px;font-size:10.0px;line-height:10.0px;letter-spacing:-0.3px;color:#222">AB-100151402</div></div><div class="r" style="left:593px;top:403px;width:62px;height:14px;overflow:hidden"><div class="t" style="left:1.5px;top:3.04px;font-size:10.0px;line-height:10.0px;letter-spacing:0px;color:#222">Consumer</div></div><div class="r" style="left:656px;top:403px;width:57px;height:14px;overflow:hidden"><div class="t" style="right:1.30px;top:3.04px;font-size:10.0px;line-height:10.0px;letter-spacing:-0.3px;color:#222">76017</div></div><div class="r" style="left:714px;top:403px;width:176px;height:14px;overflow:hidden"><div class="t" style="left:1.5px;top:3.04px;font-size:10.0px;line-height:10.0px;letter-spacing:0px;color:#222">Arlington</div></div><div class="r" style="left:891px;top:403px;width:181px;height:14px;overflow:hidden"><div class="t" style="left:1.5px;top:3.04px;font-size:10.0px;line-height:10.0px;letter-spacing:0px;color:#222">Texas</div></div><div class="r" style="left:1073px;top:403px;width:162px;height:14px;overflow:hidden"><div class="t" style="left:1.5px;top:3.04px;font-size:10.0px;line-height:10.0px;letter-spacing:0px;color:#222">United States</div></div><div class="r" style="left:1236px;top:403px;width:79px;height:14px;overflow:hidden"><div class="t" style="left:1.5px;top:3.04px;font-size:10.0px;line-height:10.0px;letter-spacing:0px;color:#222">Central US</div></div><div class="r" style="left:0px;top:432px;width:18px;height:1px;background:#d0d0d0;"></div><div class="r" style="left:19px;top:432px;width:1261px;height:1px;background:#e0e0e0;"></div><div class="r" style="left:0;top:418px;width:18px;height:14px;overflow:hidden"><div class="t" style="left:0;width:18px;text-align:center;top:3.04px;font-size:10px;line-height:10px;color:#3a3a3a">19</div></div><div class="r" style="left:19px;top:418px;width:46px;height:14px;overflow:hidden"><div class="t" style="right:1.30px;top:3.04px;font-size:10.0px;line-height:10.0px;letter-spacing:-0.3px;color:#222">12069</div></div><div class="r" style="left:66px;top:418px;width:116px;height:14px;overflow:hidden"><div class="t" style="left:1.5px;top:3.04px;font-size:10.0px;line-height:10.0px;letter-spacing:0px;color:#222">Patrick Jones</div></div><div class="r" style="left:183px;top:418px;width:66px;height:14px;overflow:hidden"><div class="t" style="right:0.70px;top:3.04px;font-size:10.0px;line-height:10.0px;letter-spacing:0.3px;color:#222">9/8/2015</div></div><div class="r" style="left:250px;top:418px;width:59px;height:14px;overflow:hidden"><div class="t" style="right:0.70px;top:3.04px;font-size:10.0px;line-height:10.0px;letter-spacing:0.3px;color:#222">9/14/2015</div></div><div class="r" style="left:310px;top:418px;width:137px;height:14px;overflow:hidden"><div class="t" style="left:1.5px;top:3.04px;font-size:10.0px;line-height:10.0px;letter-spacing:-0.32px;color:#222">ES-2015-PJ1883564-42255</div></div><div class="r" style="left:448px;top:418px;width:70px;height:14px;overflow:hidden"><div class="t" style="left:1.5px;top:3.04px;font-size:10.0px;line-height:10.0px;letter-spacing:-0.25px;color:#222">Standard Class</div></div><div class="r" style="left:519px;top:418px;width:73px;height:14px;overflow:hidden"><div class="t" style="left:1.5px;top:3.04px;font-size:10.0px;line-height:10.0px;letter-spacing:-0.3px;color:#222">PJ-1883564</div></div><div class="r" style="left:593px;top:418px;width:62px;height:14px;overflow:hidden"><div class="t" style="left:1.5px;top:3.04px;font-size:10.0px;line-height:10.0px;letter-spacing:0px;color:#222">Corporate</div></div><div class="r" style="left:714px;top:418px;width:176px;height:14px;overflow:hidden"><div class="t" style="left:1.5px;top:3.04px;font-size:10.0px;line-height:10.0px;letter-spacing:0px;color:#222">Prato</div></div><div class="r" style="left:891px;top:418px;width:181px;height:14px;overflow:hidden"><div class="t" style="left:1.5px;top:3.04px;font-size:10.0px;line-height:10.0px;letter-spacing:0px;color:#222">Tuscany</div></div><div class="r" style="left:1073px;top:418px;width:162px;height:14px;overflow:hidden"><div class="t" style="left:1.5px;top:3.04px;font-size:10.0px;line-height:10.0px;letter-spacing:0px;color:#222">Italy</div></div><div class="r" style="left:1236px;top:418px;width:79px;height:14px;overflow:hidden"><div class="t" style="left:1.5px;top:3.04px;font-size:10.0px;line-height:10.0px;letter-spacing:0px;color:#222">Southern Europe</div></div><div class="r" style="left:0px;top:446px;width:18px;height:1px;background:#d0d0d0;"></div><div class="r" style="left:19px;top:446px;width:1261px;height:1px;background:#e0e0e0;"></div><div class="r" style="left:0;top:433px;width:18px;height:13px;overflow:hidden"><div class="t" style="left:0;width:18px;text-align:center;top:2.04px;font-size:10px;line-height:10px;color:#3a3a3a">20</div></div><div class="r" style="left:19px;top:433px;width:46px;height:13px;overflow:hidden"><div class="t" style="right:1.30px;top:2.04px;font-size:10.0px;line-height:10.0px;letter-spacing:-0.3px;color:#222">22096</div></div><div class="r" style="left:66px;top:433px;width:116px;height:13px;overflow:hidden"><div class="t" style="left:1.5px;top:2.04px;font-size:10.0px;line-height:10.0px;letter-spacing:0px;color:#222">Jim Sink</div></div><div class="r" style="left:183px;top:433px;width:66px;height:13px;overflow:hidden"><div class="t" style="right:0.70px;top:2.04px;font-size:10.0px;line-height:10.0px;letter-spacing:0.3px;color:#222">1/31/2015</div></div><div class="r" style="left:250px;top:433px;width:59px;height:13px;overflow:hidden"><div class="t" style="right:0.70px;top:2.04px;font-size:10.0px;line-height:10.0px;letter-spacing:0.3px;color:#222">2/1/2015</div></div><div class="r" style="left:310px;top:433px;width:137px;height:13px;overflow:hidden"><div class="t" style="left:1.5px;top:2.04px;font-size:10.0px;line-height:10.0px;letter-spacing:-0.32px;color:#222">IN-2015-JS156857-42035</div></div><div class="r" style="left:448px;top:433px;width:70px;height:13px;overflow:hidden"><div class="t" style="left:1.5px;top:2.04px;font-size:10.0px;line-height:10.0px;letter-spacing:-0.25px;color:#222">First Class</div></div><div class="r" style="left:519px;top:433px;width:73px;height:13px;overflow:hidden"><div class="t" style="left:1.5px;top:2.04px;font-size:10.0px;line-height:10.0px;letter-spacing:-0.3px;color:#222">JS-156857</div></div><div class="r" style="left:593px;top:433px;width:62px;height:13px;overflow:hidden"><div class="t" style="left:1.5px;top:2.04px;font-size:10.0px;line-height:10.0px;letter-spacing:0px;color:#222">Corporate</div></div><div class="r" style="left:714px;top:433px;width:176px;height:13px;overflow:hidden"><div class="t" style="left:1.5px;top:2.04px;font-size:10.0px;line-height:10.0px;letter-spacing:0px;color:#222">Townsville</div></div><div class="r" style="left:891px;top:433px;width:181px;height:13px;overflow:hidden"><div class="t" style="left:1.5px;top:2.04px;font-size:10.0px;line-height:10.0px;letter-spacing:0px;color:#222">Queensland</div></div><div class="r" style="left:1073px;top:433px;width:162px;height:13px;overflow:hidden"><div class="t" style="left:1.5px;top:2.04px;font-size:10.0px;line-height:10.0px;letter-spacing:0px;color:#222">Australia</div></div><div class="r" style="left:1236px;top:433px;width:79px;height:13px;overflow:hidden"><div class="t" style="left:1.5px;top:2.04px;font-size:10.0px;line-height:10.0px;letter-spacing:0px;color:#222">Oceania</div></div><div class="r" style="left:0px;top:461px;width:18px;height:1px;background:#d0d0d0;"></div><div class="r" style="left:19px;top:461px;width:1261px;height:1px;background:#e0e0e0;"></div><div class="r" style="left:0;top:447px;width:18px;height:14px;overflow:hidden"><div class="t" style="left:0;width:18px;text-align:center;top:3.04px;font-size:10px;line-height:10px;color:#3a3a3a">21</div></div><div class="r" style="left:19px;top:447px;width:46px;height:14px;overflow:hidden"><div class="t" style="right:1.30px;top:3.04px;font-size:10.0px;line-height:10.0px;letter-spacing:-0.3px;color:#222">49463</div></div><div class="r" style="left:66px;top:447px;width:116px;height:14px;overflow:hidden"><div class="t" style="left:1.5px;top:3.04px;font-size:10.0px;line-height:10.0px;letter-spacing:0px;color:#222">Ritsa Hightower</div></div><div class="r" style="left:183px;top:447px;width:66px;height:14px;overflow:hidden"><div class="t" style="right:0.70px;top:3.04px;font-size:10.0px;line-height:10.0px;letter-spacing:0.3px;color:#222">12/5/2015</div></div><div class="r" style="left:250px;top:447px;width:59px;height:14px;overflow:hidden"><div class="t" style="right:0.70px;top:3.04px;font-size:10.0px;line-height:10.0px;letter-spacing:0.3px;color:#222">12/7/2015</div></div><div class="r" style="left:310px;top:447px;width:137px;height:14px;overflow:hidden"><div class="t" style="left:1.5px;top:3.04px;font-size:10.0px;line-height:10.0px;letter-spacing:-0.32px;color:#222">TZ-2015-RH9555129-42343</div></div><div class="r" style="left:448px;top:447px;width:70px;height:14px;overflow:hidden"><div class="t" style="left:1.5px;top:3.04px;font-size:10.0px;line-height:10.0px;letter-spacing:-0.25px;color:#222">Second Class</div></div><div class="r" style="left:519px;top:447px;width:73px;height:14px;overflow:hidden"><div class="t" style="left:1.5px;top:3.04px;font-size:10.0px;line-height:10.0px;letter-spacing:-0.3px;color:#222">RH-9555129</div></div><div class="r" style="left:593px;top:447px;width:62px;height:14px;overflow:hidden"><div class="t" style="left:1.5px;top:3.04px;font-size:10.0px;line-height:10.0px;letter-spacing:0px;color:#222">Consumer</div></div><div class="r" style="left:714px;top:447px;width:176px;height:14px;overflow:hidden"><div class="t" style="left:1.5px;top:3.04px;font-size:10.0px;line-height:10.0px;letter-spacing:0px;color:#222">Uvinza</div></div><div class="r" style="left:891px;top:447px;width:181px;height:14px;overflow:hidden"><div class="t" style="left:1.5px;top:3.04px;font-size:10.0px;line-height:10.0px;letter-spacing:0px;color:#222">Kigoma</div></div><div class="r" style="left:1073px;top:447px;width:162px;height:14px;overflow:hidden"><div class="t" style="left:1.5px;top:3.04px;font-size:10.0px;line-height:10.0px;letter-spacing:0px;color:#222">Tanzania</div></div><div class="r" style="left:1236px;top:447px;width:79px;height:14px;overflow:hidden"><div class="t" style="left:1.5px;top:3.04px;font-size:10.0px;line-height:10.0px;letter-spacing:0px;color:#222">Eastern Africa</div></div><div class="r" style="left:0px;top:475px;width:18px;height:1px;background:#d0d0d0;"></div><div class="r" style="left:19px;top:475px;width:1261px;height:1px;background:#e0e0e0;"></div><div class="r" style="left:0;top:462px;width:18px;height:13px;overflow:hidden"><div class="t" style="left:0;width:18px;text-align:center;top:2.04px;font-size:10px;line-height:10px;color:#3a3a3a">22</div></div><div class="r" style="left:19px;top:462px;width:46px;height:13px;overflow:hidden"><div class="t" style="right:1.30px;top:2.04px;font-size:10.0px;line-height:10.0px;letter-spacing:-0.3px;color:#222">46630</div></div><div class="r" style="left:66px;top:462px;width:116px;height:13px;overflow:hidden"><div class="t" style="left:1.5px;top:2.04px;font-size:10.0px;line-height:10.0px;letter-spacing:0px;color:#222">Ann Blume</div></div><div class="r" style="left:183px;top:462px;width:66px;height:13px;overflow:hidden"><div class="t" style="right:0.70px;top:2.04px;font-size:10.0px;line-height:10.0px;letter-spacing:0.3px;color:#222">8/8/2013</div></div><div class="r" style="left:250px;top:462px;width:59px;height:13px;overflow:hidden"><div class="t" style="right:0.70px;top:2.04px;font-size:10.0px;line-height:10.0px;letter-spacing:0.3px;color:#222">8/10/2013</div></div><div class="r" style="left:310px;top:462px;width:137px;height:13px;overflow:hidden"><div class="t" style="left:1.5px;top:2.04px;font-size:10.0px;line-height:10.0px;letter-spacing:-0.32px;color:#222">PL-2013-AB600103-41494</div></div><div class="r" style="left:448px;top:462px;width:70px;height:13px;overflow:hidden"><div class="t" style="left:1.5px;top:2.04px;font-size:10.0px;line-height:10.0px;letter-spacing:-0.25px;color:#222">First Class</div></div><div class="r" style="left:519px;top:462px;width:73px;height:13px;overflow:hidden"><div class="t" style="left:1.5px;top:2.04px;font-size:10.0px;line-height:10.0px;letter-spacing:-0.3px;color:#222">AB-600103</div></div><div class="r" style="left:593px;top:462px;width:62px;height:13px;overflow:hidden"><div class="t" style="left:1.5px;top:2.04px;font-size:10.0px;line-height:10.0px;letter-spacing:0px;color:#222">Corporate</div></div><div class="r" style="left:714px;top:462px;width:176px;height:13px;overflow:hidden"><div class="t" style="left:1.5px;top:2.04px;font-size:10.0px;line-height:10.0px;letter-spacing:0px;color:#222">Bytom</div></div><div class="r" style="left:891px;top:462px;width:181px;height:13px;overflow:hidden"><div class="t" style="left:1.5px;top:2.04px;font-size:10.0px;line-height:10.0px;letter-spacing:0px;color:#222">Silesia</div></div><div class="r" style="left:1073px;top:462px;width:162px;height:13px;overflow:hidden"><div class="t" style="left:1.5px;top:2.04px;font-size:10.0px;line-height:10.0px;letter-spacing:0px;color:#222">Poland</div></div><div class="r" style="left:1236px;top:462px;width:79px;height:13px;overflow:hidden"><div class="t" style="left:1.5px;top:2.04px;font-size:10.0px;line-height:10.0px;letter-spacing:0px;color:#222">Eastern Europe</div></div><div class="r" style="left:0px;top:490px;width:18px;height:1px;background:#d0d0d0;"></div><div class="r" style="left:19px;top:490px;width:1261px;height:1px;background:#e0e0e0;"></div><div class="r" style="left:0;top:476px;width:18px;height:14px;overflow:hidden"><div class="t" style="left:0;width:18px;text-align:center;top:3.04px;font-size:10px;line-height:10px;color:#3a3a3a">23</div></div><div class="r" style="left:19px;top:476px;width:46px;height:14px;overflow:hidden"><div class="t" style="right:1.30px;top:3.04px;font-size:10.0px;line-height:10.0px;letter-spacing:-0.3px;color:#222">36260</div></div><div class="r" style="left:66px;top:476px;width:116px;height:14px;overflow:hidden"><div class="t" style="left:1.5px;top:3.04px;font-size:10.0px;line-height:10.0px;letter-spacing:0px;color:#222">Aaron Bergman</div></div><div class="r" style="left:183px;top:476px;width:66px;height:14px;overflow:hidden"><div class="t" style="right:0.70px;top:3.04px;font-size:10.0px;line-height:10.0px;letter-spacing:0.3px;color:#222">3/6/2012</div></div><div class="r" style="left:250px;top:476px;width:59px;height:14px;overflow:hidden"><div class="t" style="right:0.70px;top:3.04px;font-size:10.0px;line-height:10.0px;letter-spacing:0.3px;color:#222">3/7/2012</div></div><div class="r" style="left:310px;top:476px;width:137px;height:14px;overflow:hidden"><div class="t" style="left:1.5px;top:3.04px;font-size:10.0px;line-height:10.0px;letter-spacing:-0.32px;color:#222">CA-2012-AB10015140-40974</div></div><div class="r" style="left:448px;top:476px;width:70px;height:14px;overflow:hidden"><div class="t" style="left:1.5px;top:3.04px;font-size:10.0px;line-height:10.0px;letter-spacing:-0.25px;color:#222">First Class</div></div><div class="r" style="left:519px;top:476px;width:73px;height:14px;overflow:hidden"><div class="t" style="left:1.5px;top:3.04px;font-size:10.0px;line-height:10.0px;letter-spacing:-0.3px;color:#222">AB-100151404</div></div><div class="r" style="left:593px;top:476px;width:62px;height:14px;overflow:hidden"><div class="t" style="left:1.5px;top:3.04px;font-size:10.0px;line-height:10.0px;letter-spacing:0px;color:#222">Consumer</div></div><div class="r" style="left:656px;top:476px;width:57px;height:14px;overflow:hidden"><div class="t" style="right:1.30px;top:3.04px;font-size:10.0px;line-height:10.0px;letter-spacing:-0.3px;color:#222">98103</div></div><div class="r" style="left:714px;top:476px;width:176px;height:14px;overflow:hidden"><div class="t" style="left:1.5px;top:3.04px;font-size:10.0px;line-height:10.0px;letter-spacing:0px;color:#222">Seattle</div></div><div class="r" style="left:891px;top:476px;width:181px;height:14px;overflow:hidden"><div class="t" style="left:1.5px;top:3.04px;font-size:10.0px;line-height:10.0px;letter-spacing:0px;color:#222">Washington</div></div><div class="r" style="left:1073px;top:476px;width:162px;height:14px;overflow:hidden"><div class="t" style="left:1.5px;top:3.04px;font-size:10.0px;line-height:10.0px;letter-spacing:0px;color:#222">United States</div></div><div class="r" style="left:1236px;top:476px;width:79px;height:14px;overflow:hidden"><div class="t" style="left:1.5px;top:3.04px;font-size:10.0px;line-height:10.0px;letter-spacing:0px;color:#222">Western US</div></div><div class="r" style="left:0px;top:505px;width:18px;height:1px;background:#d0d0d0;"></div><div class="r" style="left:19px;top:505px;width:1261px;height:1px;background:#e0e0e0;"></div><div class="r" style="left:0;top:491px;width:18px;height:14px;overflow:hidden"><div class="t" style="left:0;width:18px;text-align:center;top:3.04px;font-size:10px;line-height:10px;color:#3a3a3a">24</div></div><div class="r" style="left:19px;top:491px;width:46px;height:14px;overflow:hidden"><div class="t" style="right:1.30px;top:3.04px;font-size:10.0px;line-height:10.0px;letter-spacing:-0.3px;color:#222">21586</div></div><div class="r" style="left:66px;top:491px;width:116px;height:14px;overflow:hidden"><div class="t" style="left:1.5px;top:3.04px;font-size:10.0px;line-height:10.0px;letter-spacing:0px;color:#222">Jason Klamczynski</div></div><div class="r" style="left:183px;top:491px;width:66px;height:14px;overflow:hidden"><div class="t" style="right:0.70px;top:3.04px;font-size:10.0px;line-height:10.0px;letter-spacing:0.3px;color:#222">5/1/2012</div></div><div class="r" style="left:250px;top:491px;width:59px;height:14px;overflow:hidden"><div class="t" style="right:0.70px;top:3.04px;font-size:10.0px;line-height:10.0px;letter-spacing:0.3px;color:#222">5/2/2012</div></div><div class="r" style="left:310px;top:491px;width:137px;height:14px;overflow:hidden"><div class="t" style="left:1.5px;top:3.04px;font-size:10.0px;line-height:10.0px;letter-spacing:-0.32px;color:#222">IN-2012-JK1532527-41030</div></div><div class="r" style="left:448px;top:491px;width:70px;height:14px;overflow:hidden"><div class="t" style="left:1.5px;top:3.04px;font-size:10.0px;line-height:10.0px;letter-spacing:-0.25px;color:#222">First Class</div></div><div class="r" style="left:519px;top:491px;width:73px;height:14px;overflow:hidden"><div class="t" style="left:1.5px;top:3.04px;font-size:10.0px;line-height:10.0px;letter-spacing:-0.3px;color:#222">JK-1532527</div></div><div class="r" style="left:593px;top:491px;width:62px;height:14px;overflow:hidden"><div class="t" style="left:1.5px;top:3.04px;font-size:10.0px;line-height:10.0px;letter-spacing:0px;color:#222">Corporate</div></div><div class="r" style="left:714px;top:491px;width:176px;height:14px;overflow:hidden"><div class="t" style="left:1.5px;top:3.04px;font-size:10.0px;line-height:10.0px;letter-spacing:0px;color:#222">Suzhou</div></div><div class="r" style="left:891px;top:491px;width:181px;height:14px;overflow:hidden"><div class="t" style="left:1.5px;top:3.04px;font-size:10.0px;line-height:10.0px;letter-spacing:0px;color:#222">Anhui</div></div><div class="r" style="left:1073px;top:491px;width:162px;height:14px;overflow:hidden"><div class="t" style="left:1.5px;top:3.04px;font-size:10.0px;line-height:10.0px;letter-spacing:0px;color:#222">China</div></div><div class="r" style="left:1236px;top:491px;width:79px;height:14px;overflow:hidden"><div class="t" style="left:1.5px;top:3.04px;font-size:10.0px;line-height:10.0px;letter-spacing:0px;color:#222">Eastern Asia</div></div><div class="r" style="left:0px;top:520px;width:18px;height:1px;background:#d0d0d0;"></div><div class="r" style="left:19px;top:520px;width:1261px;height:1px;background:#e0e0e0;"></div><div class="r" style="left:0;top:506px;width:18px;height:14px;overflow:hidden"><div class="t" style="left:0;width:18px;text-align:center;top:3.04px;font-size:10px;line-height:10px;color:#3a3a3a">25</div></div><div class="r" style="left:19px;top:506px;width:46px;height:14px;overflow:hidden"><div class="t" style="right:1.30px;top:3.04px;font-size:10.0px;line-height:10.0px;letter-spacing:-0.3px;color:#222">13528</div></div><div class="r" style="left:66px;top:506px;width:116px;height:14px;overflow:hidden"><div class="t" style="left:1.5px;top:3.04px;font-size:10.0px;line-height:10.0px;letter-spacing:0px;color:#222">Laurel Beltran</div></div><div class="r" style="left:183px;top:506px;width:66px;height:14px;overflow:hidden"><div class="t" style="right:0.70px;top:3.04px;font-size:10.0px;line-height:10.0px;letter-spacing:0.3px;color:#222">2/27/2014</div></div><div class="r" style="left:250px;top:506px;width:59px;height:14px;overflow:hidden"><div class="t" style="right:0.70px;top:3.04px;font-size:10.0px;line-height:10.0px;letter-spacing:0.3px;color:#222">3/1/2014</div></div><div class="r" style="left:310px;top:506px;width:137px;height:14px;overflow:hidden"><div class="t" style="left:1.5px;top:3.04px;font-size:10.0px;line-height:10.0px;letter-spacing:-0.32px;color:#222">ES-2014-LB16795139-41697</div></div><div class="r" style="left:448px;top:506px;width:70px;height:14px;overflow:hidden"><div class="t" style="left:1.5px;top:3.04px;font-size:10.0px;line-height:10.0px;letter-spacing:-0.25px;color:#222">Second Class</div></div><div class="r" style="left:519px;top:506px;width:73px;height:14px;overflow:hidden"><div class="t" style="left:1.5px;top:3.04px;font-size:10.0px;line-height:10.0px;letter-spacing:-0.3px;color:#222">LB-16795139</div></div><div class="r" style="left:593px;top:506px;width:62px;height:14px;overflow:hidden"><div class="t" style="left:1.5px;top:3.04px;font-size:10.0px;line-height:10.0px;letter-spacing:0px;color:#222">Home Office</div></div><div class="r" style="left:714px;top:506px;width:176px;height:14px;overflow:hidden"><div class="t" style="left:1.5px;top:3.04px;font-size:10.0px;line-height:10.0px;letter-spacing:0px;color:#222">Edinburgh</div></div><div class="r" style="left:891px;top:506px;width:181px;height:14px;overflow:hidden"><div class="t" style="left:1.5px;top:3.04px;font-size:10.0px;line-height:10.0px;letter-spacing:0px;color:#222">Scotland</div></div><div class="r" style="left:1073px;top:506px;width:162px;height:14px;overflow:hidden"><div class="t" style="left:1.5px;top:3.04px;font-size:10.0px;line-height:10.0px;letter-spacing:0px;color:#222">United Kingdom</div></div><div class="r" style="left:1236px;top:506px;width:79px;height:14px;overflow:hidden"><div class="t" style="left:1.5px;top:3.04px;font-size:10.0px;line-height:10.0px;letter-spacing:0px;color:#222">Northern Europe</div></div><div class="r" style="left:65px;top:166px;width:1px;height:355px;background:#dcdcdc;"></div><div class="r" style="left:182px;top:166px;width:1px;height:355px;background:#dcdcdc;"></div><div class="r" style="left:249px;top:166px;width:1px;height:355px;background:#dcdcdc;"></div><div class="r" style="left:309px;top:166px;width:1px;height:355px;background:#dcdcdc;"></div><div class="r" style="left:447px;top:166px;width:1px;height:355px;background:#dcdcdc;"></div><div class="r" style="left:518px;top:166px;width:1px;height:355px;background:#dcdcdc;"></div><div class="r" style="left:592px;top:166px;width:1px;height:355px;background:#dcdcdc;"></div><div class="r" style="left:655px;top:166px;width:1px;height:355px;background:#dcdcdc;"></div><div class="r" style="left:713px;top:166px;width:1px;height:355px;background:#dcdcdc;"></div><div class="r" style="left:890px;top:166px;width:1px;height:355px;background:#dcdcdc;"></div><div class="r" style="left:1072px;top:166px;width:1px;height:355px;background:#dcdcdc;"></div><div class="r" style="left:1235px;top:166px;width:1px;height:355px;background:#dcdcdc;"></div><div class="r" style="left:18px;top:268px;width:1262px;height:2px;background:#346449;"></div><div class="r" style="left:18px;top:276.5px;width:1262px;height:1.8px;background:#346449;"></div><div class="r" style="left:18px;top:268px;width:1.6px;height:10px;background:#346449;"></div><div class="r" style="left:17.5px;top:275.5px;width:4.5px;height:3.5px;background:#346449;"></div><div class="r" style="left:22px;top:276px;width:1.2px;height:2.5px;background:#fff;"></div><div class="r" style="left:1102.5px;top:103.5px;width:135.5px;height:342.7px;background:#fff;box-sizing:border-box;border:1px solid #cfcfcf;box-shadow:0 1px 3px rgba(0,0,0,0.18);"></div><div class="r" style="left:1103.5px;top:146.5px;width:133.5px;height:21.5px;background:#e0e0e0;"></div><div class="t" style="left:1113.50px;top:110.60px;font-size:8.5px;line-height:8.5px;color:#262626;font-weight:bold;">Cell Size</div><div class="t" style="left:1131.30px;top:131.64px;font-size:8.7px;line-height:8.7px;color:#333;">Row <u>H</u>eight...</div><svg class="s" style="left:1112px;top:129.5px;" width="13" height="12" viewBox="0 0 13 12"><path d="M6.5 0.8 H11.5 V10.5 H6.5" fill="none" stroke="#555" stroke-width="1"/><path d="M2.5 1 V10.5 M1 2.5 L2.5 1 L4 2.5 M1 9 L2.5 10.5 L4 9" fill="none" stroke="#2b79c2" stroke-width="0.9"/></svg><div class="t" style="left:1131.30px;top:152.44px;font-size:8.7px;line-height:8.7px;color:#333;"><u>A</u>utoFit Row Height</div><div class="t" style="left:1131.30px;top:174.54px;font-size:8.7px;line-height:8.7px;color:#333;">Column <u>W</u>idth...</div><svg class="s" style="left:1112px;top:173px;" width="13" height="12" viewBox="0 0 13 12"><path d="M1 7.5 V1 H11.5 V7.5" fill="none" stroke="#555" stroke-width="1"/><path d="M1 10.5 H11.5 M2.5 9 L1 10.5 L2.5 12 M10 9 L11.5 10.5 L10 12" fill="none" stroke="#2b79c2" stroke-width="0.9"/></svg><div class="t" style="left:1131.30px;top:195.24px;font-size:8.7px;line-height:8.7px;color:#333;">AutoF<u>i</u>t Column Width</div><div class="t" style="left:1131.30px;top:215.64px;font-size:8.7px;line-height:8.7px;color:#333;"><u>D</u>efault Width...</div><div class="t" style="left:1131.30px;top:258.84px;font-size:8.7px;line-height:8.7px;color:#333;">Hide &amp; <u>U</u>nhide</div><svg class="s" style="left:1224px;top:258.2px;" width="7" height="9" viewBox="0 0 7 9"><path d="M1.5 1 L5 4.5 L1.5 8" fill="none" stroke="#555" stroke-width="0.9"/></svg><div class="t" style="left:1131.30px;top:302.64px;font-size:8.7px;line-height:8.7px;color:#333;"><u>R</u>ename Sheet</div><svg class="s" style="left:1112px;top:300.5px;" width="13" height="13" viewBox="0 0 13 13"><rect x="0.5" y="0.5" width="10" height="10" fill="#fff" stroke="#666" stroke-width="0.9"/><path d="M0.5 3.5 H10.5 M0.5 6.5 H10.5 M4 0.5 V10.5" stroke="#888" stroke-width="0.7"/><path d="M5 12 L12 5 L12.8 5.8 L5.8 12.8 Z" fill="#2b79c2"/></svg><div class="t" style="left:1131.30px;top:324.14px;font-size:8.7px;line-height:8.7px;color:#333;"><u>M</u>ove or Copy Sheet...</div><div class="t" style="left:1131.30px;top:344.14px;font-size:8.7px;line-height:8.7px;color:#333;"><u>T</u>ab Color</div><svg class="s" style="left:1224px;top:343.5px;" width="7" height="9" viewBox="0 0 7 9"><path d="M1.5 1 L5 4.5 L1.5 8" fill="none" stroke="#555" stroke-width="0.9"/></svg><div class="t" style="left:1131.30px;top:387.14px;font-size:8.7px;line-height:8.7px;color:#333;"><u>P</u>rotect Sheet...</div><svg class="s" style="left:1112px;top:386.5px;" width="13" height="12" viewBox="0 0 13 12"><rect x="0.5" y="0.5" width="10" height="10" fill="#fff" stroke="#666" stroke-width="0.9"/><path d="M0.5 3.5 H10.5 M0.5 6.5 H10.5 M4 0.5 V10.5" stroke="#888" stroke-width="0.7"/><rect x="7" y="6.5" width="5.5" height="5" fill="#f0a830"/><path d="M8 6.5 V5 C8 3.5 11.5 3.5 11.5 5 V6.5" fill="none" stroke="#8a6a30" stroke-width="0.8"/></svg><div class="t" style="left:1131.30px;top:408.04px;font-size:8.7px;line-height:8.7px;color:#333;"><u>L</u>ock Cell</div><div class="r" style="left:1111px;top:404.4px;width:14.7px;height:14.1px;background:#c9c9c9;box-sizing:border-box;border:1px solid #9a9a9a;"></div><svg class="s" style="left:1112px;top:405px;" width="13" height="13" viewBox="0 0 13 13"><rect x="3" y="6" width="7.5" height="5.5" fill="none" stroke="#444" stroke-width="1"/><path d="M4.5 6 V4 C4.5 1.8 9 1.8 9 4 V6" fill="none" stroke="#444" stroke-width="1"/></svg><div class="t" style="left:1131.30px;top:430.24px;font-size:8.7px;line-height:8.7px;color:#333;">Format C<u>e</u>lls...</div><svg class="s" style="left:1114px;top:428px;" width="10" height="12" viewBox="0 0 10 12"><rect x="0.6" y="0.6" width="8.4" height="10.8" fill="#fff" stroke="#555" stroke-width="1"/><path d="M2.5 4 H3.8 M4.8 4 H7 M2.5 7.5 H3.8 M4.8 7.5 H7" stroke="#666" stroke-width="1"/></svg><div class="t" style="left:1113.80px;top:237.80px;font-size:8.5px;line-height:8.5px;color:#262626;font-weight:bold;">Visibility</div><div class="t" style="left:1113.80px;top:281.00px;font-size:8.5px;line-height:8.5px;color:#262626;font-weight:bold;">Organize Sheets</div><div class="t" style="left:1114.00px;top:366.40px;font-size:8.5px;line-height:8.5px;color:#262626;font-weight:bold;">Protection</div><div class="r" style="left:1127.3px;top:423.5px;width:109px;height:1px;background:#e1e1e1;"></div><svg class="s" style="left:0;top:0;mix-blend-mode:multiply;filter:blur(0.6px)" width="1280" height="521"><path d="M1078 78.5 Q1090 76.5 1102 77 Q1120 77.5 1133 79.5 Q1142 81 1143.5 87 L1143 96 Q1141 103 1135 104.5 Q1120 106 1108 106.5 L1107 143.6 Q1150 143.8 1180 143.4 Q1205 141 1218 139.8 Q1233 139.5 1237.5 149 L1237.5 161 Q1236 168 1226 169.5 Q1200 171.5 1180 171.3 L1103 171 L1102.5 166 L1086 166 L1086 158 Q1088 152 1093 148 Q1095.5 145 1095.5 140 L1096 101 Q1093 97.5 1089 95.5 Q1082 93 1078.5 88.5 Q1076.5 83 1078 78.5 Z" fill="#f2f200"/></svg>
</body></html>
